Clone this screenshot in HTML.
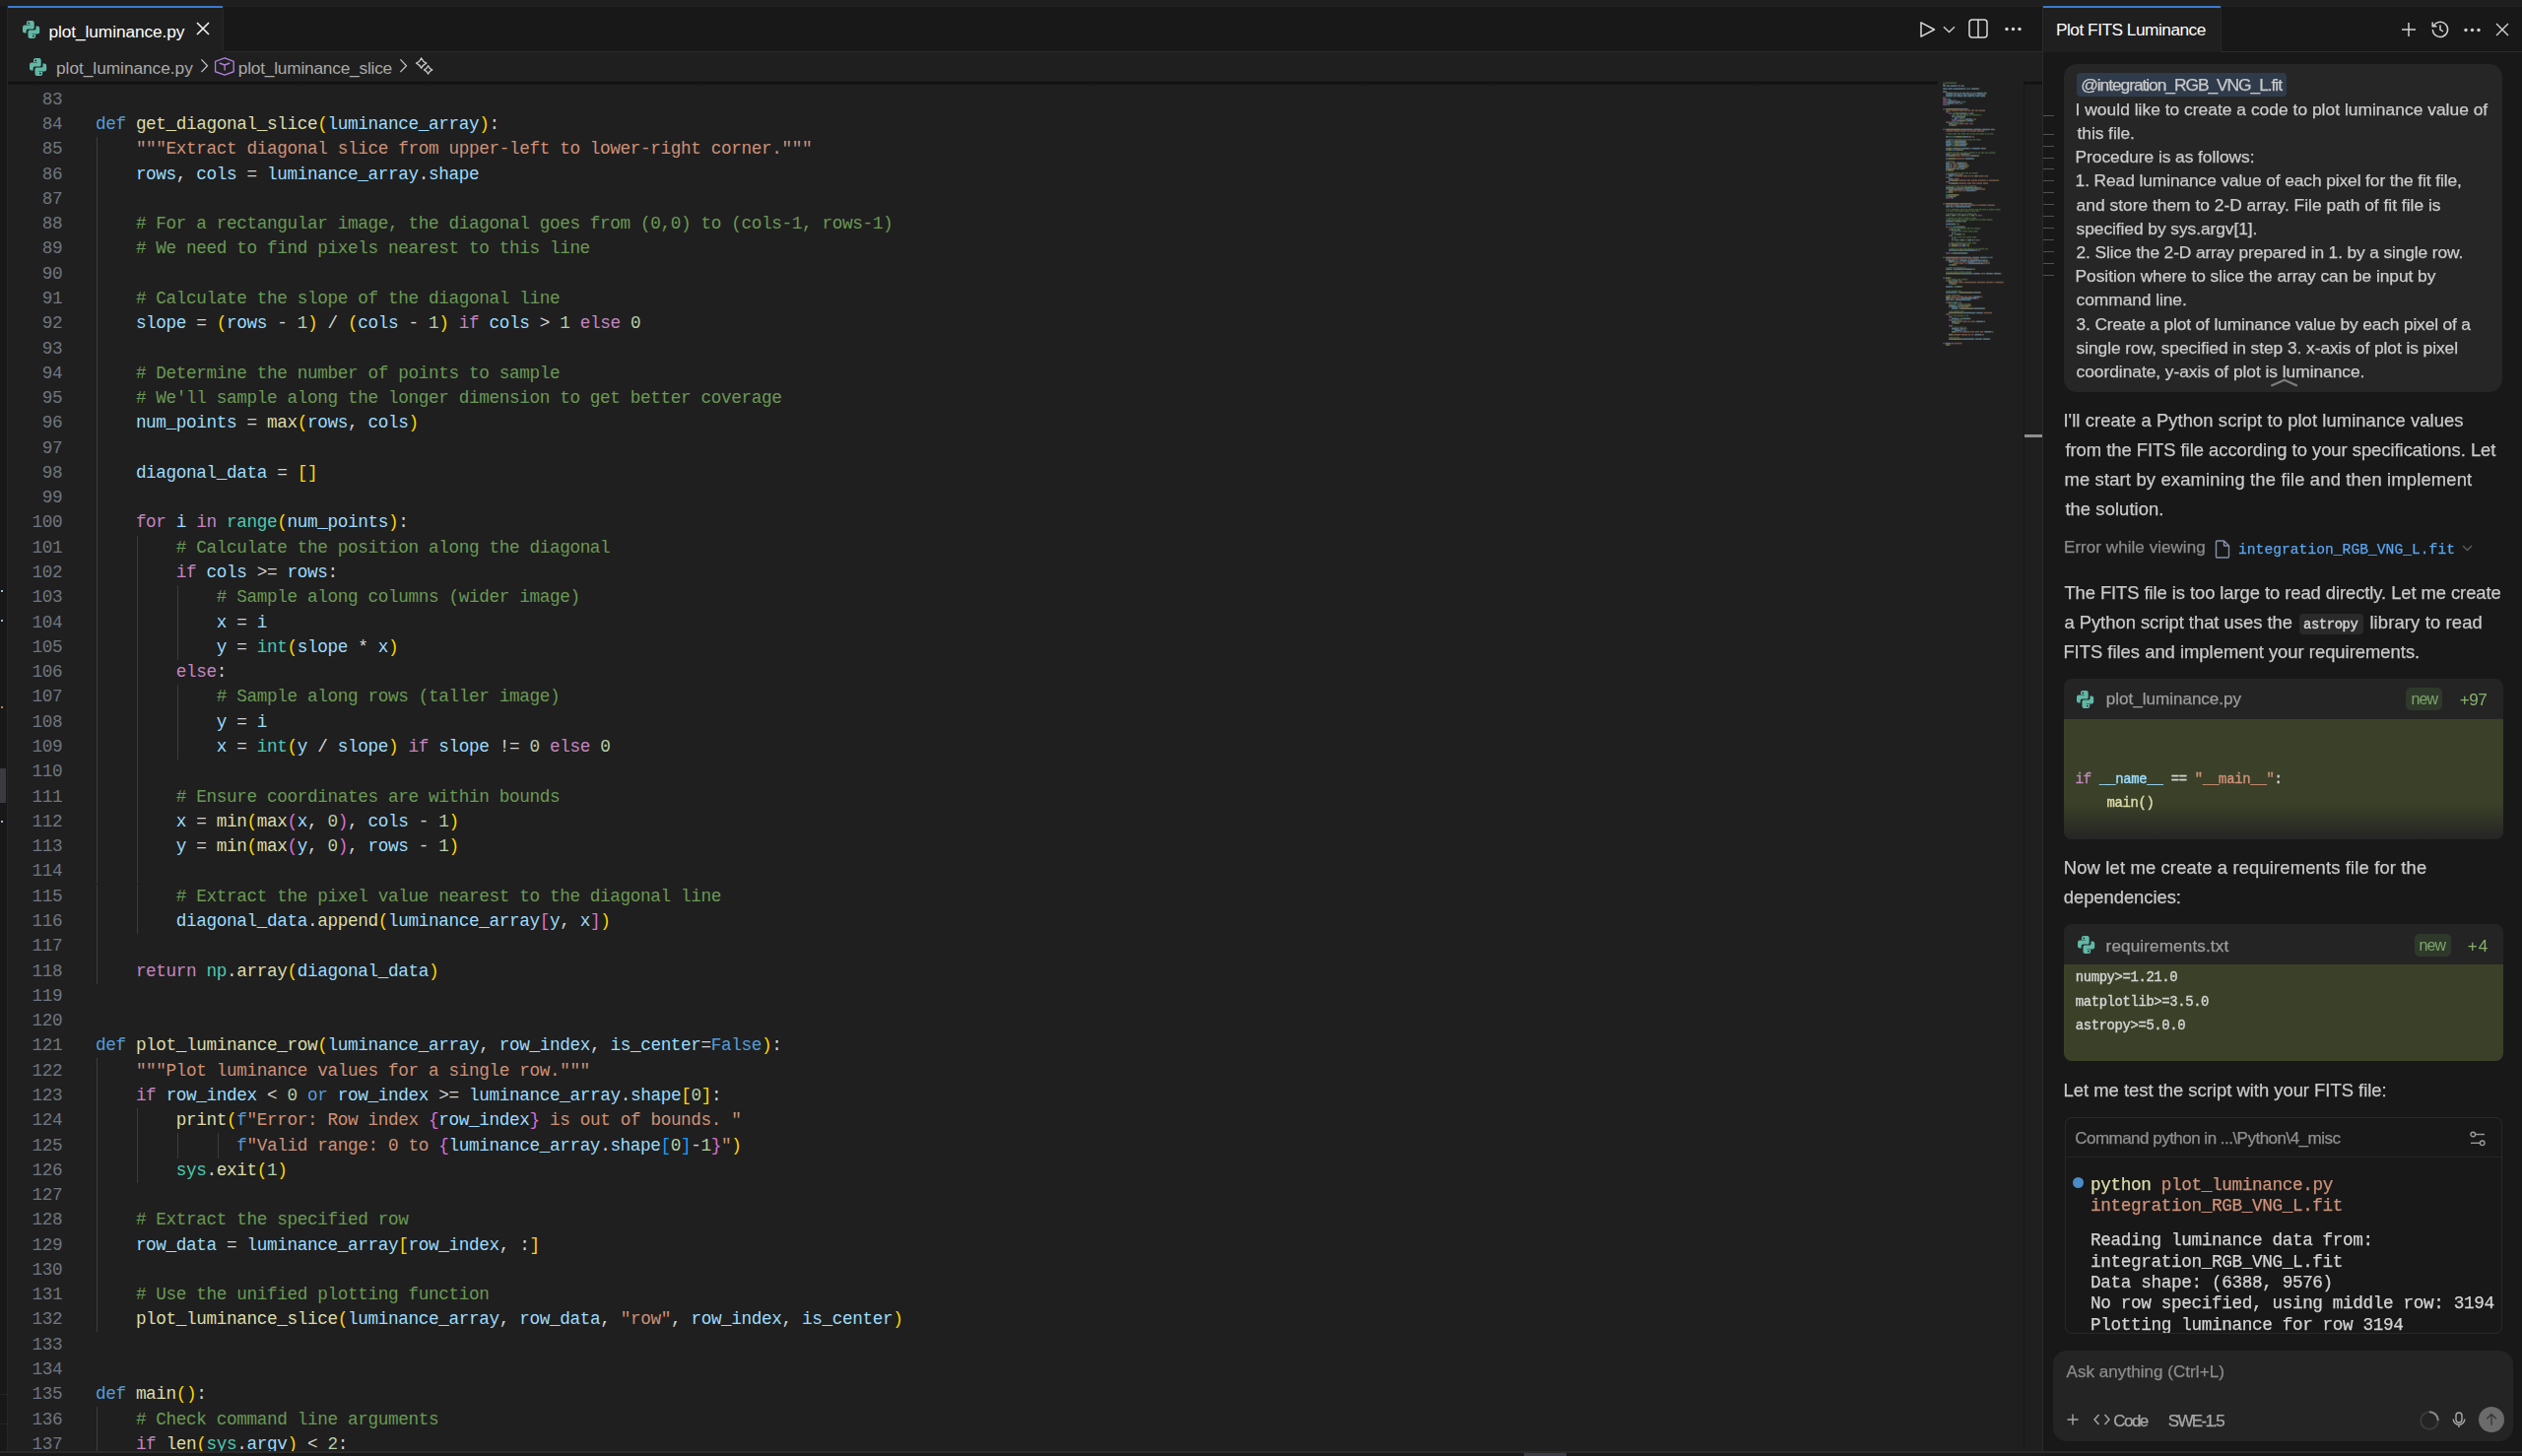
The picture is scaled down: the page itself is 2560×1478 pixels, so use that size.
<!DOCTYPE html><html><head><meta charset="utf-8"><style>
*{margin:0;padding:0;box-sizing:border-box}
html,body{width:2560px;height:1478px;overflow:hidden;background:#1f1f1f}
.a{position:absolute}
.t{white-space:pre}
.s1{-webkit-text-stroke:0.25px currentColor}
.s2{-webkit-text-stroke:0.4px currentColor}
svg{position:absolute;overflow:visible}
</style></head><body>
<div class="a" style="left:0px;top:0px;width:2560.00px;height:6.00px;background:#1f1f1f;"></div>
<div class="a" style="left:0px;top:6px;width:6.50px;height:1468.00px;background:#181818;"></div>
<div class="a" style="left:6.5px;top:6px;width:1.00px;height:1468.00px;background:#262626;"></div>
<div class="a" style="left:7.5px;top:6px;width:2065.50px;height:46.50px;background:#181818;"></div>
<div class="a" style="left:7.5px;top:6px;width:2065.50px;height:1.00px;background:#222222;"></div>
<div class="a" style="left:7.5px;top:52px;width:2065.50px;height:1.00px;background:#2b2b2b;"></div>
<div class="a" style="left:7.5px;top:6px;width:218.00px;height:47.00px;background:#1f1f1f;"></div>
<div class="a" style="left:225.5px;top:6px;width:1.00px;height:46.50px;background:#262626;"></div>
<div class="a" style="left:7.5px;top:6.2px;width:218.00px;height:2.00px;background:#3b7bd2;"></div>
<div class="a" style="left:7.5px;top:53px;width:2065.50px;height:1420.00px;background:#1f1f1f;"></div>
<div class="a" style="left:0px;top:779.6px;width:6.00px;height:35.00px;background:#3a3a40;"></div>
<div class="a" style="left:1px;top:599px;width:2.00px;height:2.00px;background:#9ab8d8;"></div>
<div class="a" style="left:1px;top:629px;width:2.00px;height:2.00px;background:#9ab8d8;"></div>
<div class="a" style="left:1px;top:716.7px;width:2.00px;height:2.00px;background:#c08050;"></div>
<div class="a" style="left:1px;top:833.2px;width:2.00px;height:2.00px;background:#9ab8d8;"></div>
<div class="a" style="left:97.70px;top:139.25px;width:1.3px;height:25.275px;background:#3c3c3c"></div>
<div class="a" style="left:97.70px;top:164.52px;width:1.3px;height:25.275px;background:#3c3c3c"></div>
<div class="a" style="left:97.70px;top:189.80px;width:1.3px;height:25.275px;background:#3c3c3c"></div>
<div class="a" style="left:97.70px;top:215.07px;width:1.3px;height:25.275px;background:#3c3c3c"></div>
<div class="a" style="left:97.70px;top:240.35px;width:1.3px;height:25.275px;background:#3c3c3c"></div>
<div class="a" style="left:97.70px;top:265.62px;width:1.3px;height:25.275px;background:#3c3c3c"></div>
<div class="a" style="left:97.70px;top:290.90px;width:1.3px;height:25.275px;background:#3c3c3c"></div>
<div class="a" style="left:97.70px;top:316.18px;width:1.3px;height:25.275px;background:#3c3c3c"></div>
<div class="a" style="left:97.70px;top:341.45px;width:1.3px;height:25.275px;background:#3c3c3c"></div>
<div class="a" style="left:97.70px;top:366.72px;width:1.3px;height:25.275px;background:#3c3c3c"></div>
<div class="a" style="left:97.70px;top:392.00px;width:1.3px;height:25.275px;background:#3c3c3c"></div>
<div class="a" style="left:97.70px;top:417.27px;width:1.3px;height:25.275px;background:#3c3c3c"></div>
<div class="a" style="left:97.70px;top:442.55px;width:1.3px;height:25.275px;background:#3c3c3c"></div>
<div class="a" style="left:97.70px;top:467.82px;width:1.3px;height:25.275px;background:#3c3c3c"></div>
<div class="a" style="left:97.70px;top:493.10px;width:1.3px;height:25.275px;background:#3c3c3c"></div>
<div class="a" style="left:97.70px;top:518.38px;width:1.3px;height:25.275px;background:#3c3c3c"></div>
<div class="a" style="left:97.70px;top:543.65px;width:1.3px;height:25.275px;background:#3c3c3c"></div>
<div class="a" style="left:138.70px;top:543.65px;width:1.3px;height:25.275px;background:#3c3c3c"></div>
<div class="a" style="left:97.70px;top:568.92px;width:1.3px;height:25.275px;background:#3c3c3c"></div>
<div class="a" style="left:138.70px;top:568.92px;width:1.3px;height:25.275px;background:#3c3c3c"></div>
<div class="a" style="left:97.70px;top:594.20px;width:1.3px;height:25.275px;background:#3c3c3c"></div>
<div class="a" style="left:138.70px;top:594.20px;width:1.3px;height:25.275px;background:#3c3c3c"></div>
<div class="a" style="left:179.70px;top:594.20px;width:1.3px;height:25.275px;background:#3c3c3c"></div>
<div class="a" style="left:97.70px;top:619.48px;width:1.3px;height:25.275px;background:#3c3c3c"></div>
<div class="a" style="left:138.70px;top:619.48px;width:1.3px;height:25.275px;background:#3c3c3c"></div>
<div class="a" style="left:179.70px;top:619.48px;width:1.3px;height:25.275px;background:#3c3c3c"></div>
<div class="a" style="left:97.70px;top:644.75px;width:1.3px;height:25.275px;background:#3c3c3c"></div>
<div class="a" style="left:138.70px;top:644.75px;width:1.3px;height:25.275px;background:#3c3c3c"></div>
<div class="a" style="left:179.70px;top:644.75px;width:1.3px;height:25.275px;background:#3c3c3c"></div>
<div class="a" style="left:97.70px;top:670.02px;width:1.3px;height:25.275px;background:#3c3c3c"></div>
<div class="a" style="left:138.70px;top:670.02px;width:1.3px;height:25.275px;background:#3c3c3c"></div>
<div class="a" style="left:97.70px;top:695.30px;width:1.3px;height:25.275px;background:#3c3c3c"></div>
<div class="a" style="left:138.70px;top:695.30px;width:1.3px;height:25.275px;background:#3c3c3c"></div>
<div class="a" style="left:179.70px;top:695.30px;width:1.3px;height:25.275px;background:#3c3c3c"></div>
<div class="a" style="left:97.70px;top:720.58px;width:1.3px;height:25.275px;background:#3c3c3c"></div>
<div class="a" style="left:138.70px;top:720.58px;width:1.3px;height:25.275px;background:#3c3c3c"></div>
<div class="a" style="left:179.70px;top:720.58px;width:1.3px;height:25.275px;background:#3c3c3c"></div>
<div class="a" style="left:97.70px;top:745.85px;width:1.3px;height:25.275px;background:#3c3c3c"></div>
<div class="a" style="left:138.70px;top:745.85px;width:1.3px;height:25.275px;background:#3c3c3c"></div>
<div class="a" style="left:179.70px;top:745.85px;width:1.3px;height:25.275px;background:#3c3c3c"></div>
<div class="a" style="left:97.70px;top:771.12px;width:1.3px;height:25.275px;background:#3c3c3c"></div>
<div class="a" style="left:138.70px;top:771.12px;width:1.3px;height:25.275px;background:#3c3c3c"></div>
<div class="a" style="left:97.70px;top:796.40px;width:1.3px;height:25.275px;background:#3c3c3c"></div>
<div class="a" style="left:138.70px;top:796.40px;width:1.3px;height:25.275px;background:#3c3c3c"></div>
<div class="a" style="left:97.70px;top:821.67px;width:1.3px;height:25.275px;background:#3c3c3c"></div>
<div class="a" style="left:138.70px;top:821.67px;width:1.3px;height:25.275px;background:#3c3c3c"></div>
<div class="a" style="left:97.70px;top:846.95px;width:1.3px;height:25.275px;background:#3c3c3c"></div>
<div class="a" style="left:138.70px;top:846.95px;width:1.3px;height:25.275px;background:#3c3c3c"></div>
<div class="a" style="left:97.70px;top:872.23px;width:1.3px;height:25.275px;background:#3c3c3c"></div>
<div class="a" style="left:138.70px;top:872.23px;width:1.3px;height:25.275px;background:#3c3c3c"></div>
<div class="a" style="left:97.70px;top:897.50px;width:1.3px;height:25.275px;background:#3c3c3c"></div>
<div class="a" style="left:138.70px;top:897.50px;width:1.3px;height:25.275px;background:#3c3c3c"></div>
<div class="a" style="left:97.70px;top:922.77px;width:1.3px;height:25.275px;background:#3c3c3c"></div>
<div class="a" style="left:138.70px;top:922.77px;width:1.3px;height:25.275px;background:#3c3c3c"></div>
<div class="a" style="left:97.70px;top:948.05px;width:1.3px;height:25.275px;background:#3c3c3c"></div>
<div class="a" style="left:97.70px;top:973.33px;width:1.3px;height:25.275px;background:#3c3c3c"></div>
<div class="a" style="left:97.70px;top:1074.42px;width:1.3px;height:25.275px;background:#3c3c3c"></div>
<div class="a" style="left:97.70px;top:1099.70px;width:1.3px;height:25.275px;background:#3c3c3c"></div>
<div class="a" style="left:97.70px;top:1124.97px;width:1.3px;height:25.275px;background:#3c3c3c"></div>
<div class="a" style="left:138.70px;top:1124.97px;width:1.3px;height:25.275px;background:#3c3c3c"></div>
<div class="a" style="left:97.70px;top:1150.25px;width:1.3px;height:25.275px;background:#3c3c3c"></div>
<div class="a" style="left:138.70px;top:1150.25px;width:1.3px;height:25.275px;background:#3c3c3c"></div>
<div class="a" style="left:179.70px;top:1150.25px;width:1.3px;height:25.275px;background:#3c3c3c"></div>
<div class="a" style="left:220.70px;top:1150.25px;width:1.3px;height:25.275px;background:#3c3c3c"></div>
<div class="a" style="left:97.70px;top:1175.53px;width:1.3px;height:25.275px;background:#3c3c3c"></div>
<div class="a" style="left:138.70px;top:1175.53px;width:1.3px;height:25.275px;background:#3c3c3c"></div>
<div class="a" style="left:97.70px;top:1200.80px;width:1.3px;height:25.275px;background:#3c3c3c"></div>
<div class="a" style="left:97.70px;top:1226.08px;width:1.3px;height:25.275px;background:#3c3c3c"></div>
<div class="a" style="left:97.70px;top:1251.35px;width:1.3px;height:25.275px;background:#3c3c3c"></div>
<div class="a" style="left:97.70px;top:1276.62px;width:1.3px;height:25.275px;background:#3c3c3c"></div>
<div class="a" style="left:97.70px;top:1301.90px;width:1.3px;height:25.275px;background:#3c3c3c"></div>
<div class="a" style="left:97.70px;top:1327.17px;width:1.3px;height:25.275px;background:#3c3c3c"></div>
<div class="a" style="left:97.70px;top:1428.27px;width:1.3px;height:25.275px;background:#3c3c3c"></div>
<div class="a" style="left:97.70px;top:1453.55px;width:1.3px;height:25.275px;background:#3c3c3c"></div>
<div class="a t" id="code" style="left:96.9px;top:88.70px;font-family:'Liberation Mono', monospace;font-size:17.7px;letter-spacing:-0.37px;line-height:25.275px;color:#d4d4d4">
<span style="color:#569cd6">def</span> <span style="color:#dcdcaa">get_diagonal_slice</span><span style="color:#ffd700">(</span><span style="color:#9cdcfe">luminance_array</span><span style="color:#ffd700">)</span><span style="color:#d4d4d4">:</span>
    <span style="color:#ce9178">"""Extract diagonal slice from upper-left to lower-right corner."""</span>
    <span style="color:#9cdcfe">rows</span><span style="color:#d4d4d4">,</span> <span style="color:#9cdcfe">cols</span> <span style="color:#d4d4d4">=</span> <span style="color:#9cdcfe">luminance_array</span><span style="color:#d4d4d4">.</span><span style="color:#9cdcfe">shape</span>

    <span style="color:#6a9955"># For a rectangular image, the diagonal goes from (0,0) to (cols-1, rows-1)</span>
    <span style="color:#6a9955"># We need to find pixels nearest to this line</span>

    <span style="color:#6a9955"># Calculate the slope of the diagonal line</span>
    <span style="color:#9cdcfe">slope</span> <span style="color:#d4d4d4">=</span> <span style="color:#ffd700">(</span><span style="color:#9cdcfe">rows</span> <span style="color:#d4d4d4">-</span> <span style="color:#b5cea8">1</span><span style="color:#ffd700">)</span> <span style="color:#d4d4d4">/</span> <span style="color:#ffd700">(</span><span style="color:#9cdcfe">cols</span> <span style="color:#d4d4d4">-</span> <span style="color:#b5cea8">1</span><span style="color:#ffd700">)</span> <span style="color:#c586c0">if</span> <span style="color:#9cdcfe">cols</span> <span style="color:#d4d4d4">&gt;</span> <span style="color:#b5cea8">1</span> <span style="color:#c586c0">else</span> <span style="color:#b5cea8">0</span>

    <span style="color:#6a9955"># Determine the number of points to sample</span>
    <span style="color:#6a9955"># We'll sample along the longer dimension to get better coverage</span>
    <span style="color:#9cdcfe">num_points</span> <span style="color:#d4d4d4">=</span> <span style="color:#dcdcaa">max</span><span style="color:#ffd700">(</span><span style="color:#9cdcfe">rows</span><span style="color:#d4d4d4">,</span> <span style="color:#9cdcfe">cols</span><span style="color:#ffd700">)</span>

    <span style="color:#9cdcfe">diagonal_data</span> <span style="color:#d4d4d4">=</span> <span style="color:#ffd700">[</span><span style="color:#ffd700">]</span>

    <span style="color:#c586c0">for</span> <span style="color:#9cdcfe">i</span> <span style="color:#c586c0">in</span> <span style="color:#4ec9b0">range</span><span style="color:#ffd700">(</span><span style="color:#9cdcfe">num_points</span><span style="color:#ffd700">)</span><span style="color:#d4d4d4">:</span>
        <span style="color:#6a9955"># Calculate the position along the diagonal</span>
        <span style="color:#c586c0">if</span> <span style="color:#9cdcfe">cols</span> <span style="color:#d4d4d4">&gt;=</span> <span style="color:#9cdcfe">rows</span><span style="color:#d4d4d4">:</span>
            <span style="color:#6a9955"># Sample along columns (wider image)</span>
            <span style="color:#9cdcfe">x</span> <span style="color:#d4d4d4">=</span> <span style="color:#9cdcfe">i</span>
            <span style="color:#9cdcfe">y</span> <span style="color:#d4d4d4">=</span> <span style="color:#4ec9b0">int</span><span style="color:#ffd700">(</span><span style="color:#9cdcfe">slope</span> <span style="color:#d4d4d4">*</span> <span style="color:#9cdcfe">x</span><span style="color:#ffd700">)</span>
        <span style="color:#c586c0">else</span><span style="color:#d4d4d4">:</span>
            <span style="color:#6a9955"># Sample along rows (taller image)</span>
            <span style="color:#9cdcfe">y</span> <span style="color:#d4d4d4">=</span> <span style="color:#9cdcfe">i</span>
            <span style="color:#9cdcfe">x</span> <span style="color:#d4d4d4">=</span> <span style="color:#4ec9b0">int</span><span style="color:#ffd700">(</span><span style="color:#9cdcfe">y</span> <span style="color:#d4d4d4">/</span> <span style="color:#9cdcfe">slope</span><span style="color:#ffd700">)</span> <span style="color:#c586c0">if</span> <span style="color:#9cdcfe">slope</span> <span style="color:#d4d4d4">!=</span> <span style="color:#b5cea8">0</span> <span style="color:#c586c0">else</span> <span style="color:#b5cea8">0</span>

        <span style="color:#6a9955"># Ensure coordinates are within bounds</span>
        <span style="color:#9cdcfe">x</span> <span style="color:#d4d4d4">=</span> <span style="color:#dcdcaa">min</span><span style="color:#ffd700">(</span><span style="color:#dcdcaa">max</span><span style="color:#da70d6">(</span><span style="color:#9cdcfe">x</span><span style="color:#d4d4d4">,</span> <span style="color:#b5cea8">0</span><span style="color:#da70d6">)</span><span style="color:#d4d4d4">,</span> <span style="color:#9cdcfe">cols</span> <span style="color:#d4d4d4">-</span> <span style="color:#b5cea8">1</span><span style="color:#ffd700">)</span>
        <span style="color:#9cdcfe">y</span> <span style="color:#d4d4d4">=</span> <span style="color:#dcdcaa">min</span><span style="color:#ffd700">(</span><span style="color:#dcdcaa">max</span><span style="color:#da70d6">(</span><span style="color:#9cdcfe">y</span><span style="color:#d4d4d4">,</span> <span style="color:#b5cea8">0</span><span style="color:#da70d6">)</span><span style="color:#d4d4d4">,</span> <span style="color:#9cdcfe">rows</span> <span style="color:#d4d4d4">-</span> <span style="color:#b5cea8">1</span><span style="color:#ffd700">)</span>

        <span style="color:#6a9955"># Extract the pixel value nearest to the diagonal line</span>
        <span style="color:#9cdcfe">diagonal_data</span><span style="color:#d4d4d4">.</span><span style="color:#dcdcaa">append</span><span style="color:#ffd700">(</span><span style="color:#9cdcfe">luminance_array</span><span style="color:#da70d6">[</span><span style="color:#9cdcfe">y</span><span style="color:#d4d4d4">,</span> <span style="color:#9cdcfe">x</span><span style="color:#da70d6">]</span><span style="color:#ffd700">)</span>

    <span style="color:#c586c0">return</span> <span style="color:#4ec9b0">np</span><span style="color:#d4d4d4">.</span><span style="color:#dcdcaa">array</span><span style="color:#ffd700">(</span><span style="color:#9cdcfe">diagonal_data</span><span style="color:#ffd700">)</span>


<span style="color:#569cd6">def</span> <span style="color:#dcdcaa">plot_luminance_row</span><span style="color:#ffd700">(</span><span style="color:#9cdcfe">luminance_array</span><span style="color:#d4d4d4">,</span> <span style="color:#9cdcfe">row_index</span><span style="color:#d4d4d4">,</span> <span style="color:#9cdcfe">is_center</span><span style="color:#d4d4d4">=</span><span style="color:#569cd6">False</span><span style="color:#ffd700">)</span><span style="color:#d4d4d4">:</span>
    <span style="color:#ce9178">"""Plot luminance values for a single row."""</span>
    <span style="color:#c586c0">if</span> <span style="color:#9cdcfe">row_index</span> <span style="color:#d4d4d4">&lt;</span> <span style="color:#b5cea8">0</span> <span style="color:#569cd6">or</span> <span style="color:#9cdcfe">row_index</span> <span style="color:#d4d4d4">&gt;=</span> <span style="color:#9cdcfe">luminance_array</span><span style="color:#d4d4d4">.</span><span style="color:#9cdcfe">shape</span><span style="color:#ffd700">[</span><span style="color:#b5cea8">0</span><span style="color:#ffd700">]</span><span style="color:#d4d4d4">:</span>
        <span style="color:#dcdcaa">print</span><span style="color:#ffd700">(</span><span style="color:#569cd6">f</span><span style="color:#ce9178">"Error: Row index </span><span style="color:#da70d6">{</span><span style="color:#9cdcfe">row_index</span><span style="color:#da70d6">}</span><span style="color:#ce9178"> is out of bounds. "</span>
              <span style="color:#569cd6">f</span><span style="color:#ce9178">"Valid range: 0 to </span><span style="color:#da70d6">{</span><span style="color:#9cdcfe">luminance_array</span><span style="color:#d4d4d4">.</span><span style="color:#9cdcfe">shape</span><span style="color:#179fff">[</span><span style="color:#b5cea8">0</span><span style="color:#179fff">]</span><span style="color:#d4d4d4">-</span><span style="color:#b5cea8">1</span><span style="color:#da70d6">}</span><span style="color:#ce9178">"</span><span style="color:#ffd700">)</span>
        <span style="color:#4ec9b0">sys</span><span style="color:#d4d4d4">.</span><span style="color:#dcdcaa">exit</span><span style="color:#ffd700">(</span><span style="color:#b5cea8">1</span><span style="color:#ffd700">)</span>

    <span style="color:#6a9955"># Extract the specified row</span>
    <span style="color:#9cdcfe">row_data</span> <span style="color:#d4d4d4">=</span> <span style="color:#9cdcfe">luminance_array</span><span style="color:#ffd700">[</span><span style="color:#9cdcfe">row_index</span><span style="color:#d4d4d4">,</span> <span style="color:#d4d4d4">:</span><span style="color:#ffd700">]</span>

    <span style="color:#6a9955"># Use the unified plotting function</span>
    <span style="color:#dcdcaa">plot_luminance_slice</span><span style="color:#ffd700">(</span><span style="color:#9cdcfe">luminance_array</span><span style="color:#d4d4d4">,</span> <span style="color:#9cdcfe">row_data</span><span style="color:#d4d4d4">,</span> <span style="color:#ce9178">"row"</span><span style="color:#d4d4d4">,</span> <span style="color:#9cdcfe">row_index</span><span style="color:#d4d4d4">,</span> <span style="color:#9cdcfe">is_center</span><span style="color:#ffd700">)</span>


<span style="color:#569cd6">def</span> <span style="color:#dcdcaa">main</span><span style="color:#ffd700">(</span><span style="color:#ffd700">)</span><span style="color:#d4d4d4">:</span>
    <span style="color:#6a9955"># Check command line arguments</span>
    <span style="color:#c586c0">if</span> <span style="color:#dcdcaa">len</span><span style="color:#ffd700">(</span><span style="color:#4ec9b0">sys</span><span style="color:#d4d4d4">.</span><span style="color:#9cdcfe">argv</span><span style="color:#ffd700">)</span> <span style="color:#d4d4d4">&lt;</span> <span style="color:#b5cea8">2</span><span style="color:#d4d4d4">:</span></div>
<div class="a t" id="nums" style="left:0px;width:63.2px;text-align:right;top:88.70px;font-family:'Liberation Mono', monospace;font-size:17.7px;letter-spacing:-0.37px;line-height:25.275px;color:#6e7681">83
84
85
86
87
88
89
90
91
92
93
94
95
96
97
98
99
100
101
102
103
104
105
106
107
108
109
110
111
112
113
114
115
116
117
118
119
120
121
122
123
124
125
126
127
128
129
130
131
132
133
134
135
136
137</div>
<div class="a" style="left:7.5px;top:83px;width:1959px;height:4px;background:linear-gradient(#0d0d0d,rgba(0,0,0,0))"></div>
<svg width="17.2" height="18.1" viewBox="0 0 17.2 18.1" style="left:23px;top:20.8px"><g fill="#62b8a6">
<path id="pyh" d="M4 2.1Q4 0 6.1 0H9.6Q11.7 0 11.7 2.1V6.9Q11.7 8.5 10.1 8.5H5.3Q3.7 8.5 3.7 10.1V12.5H2.1Q0 12.5 0 10.4V6.7Q0 4.6 2.1 4.6H4Z"/>
<path d="M4 2.1Q4 0 6.1 0H9.6Q11.7 0 11.7 2.1V6.9Q11.7 8.5 10.1 8.5H5.3Q3.7 8.5 3.7 10.1V12.5H2.1Q0 12.5 0 10.4V6.7Q0 4.6 2.1 4.6H4Z" transform="rotate(180 8.6 9.05)"/></g>
<g fill="#1f1f1f"><circle cx="6.3" cy="2.4" r="0.85"/><circle cx="10.9" cy="15.7" r="0.85"/></g>
<g stroke="#1f1f1f" stroke-width="0.45"><path d="M4 4.6H7.8"/><path d="M9.4 13.5H13.2"/></g></svg>
<div id="tab" class="a t " style="left:49.60px;top:19.61px;font-family:'Liberation Sans', sans-serif;font-size:17.3px;line-height:24.22px;color:#ffffff;letter-spacing:-0.094px;">plot_luminance.py</div>
<svg width="14" height="14" viewBox="0 0 14 14" style="left:199.3px;top:22px"><path d="M1 1L13 13M13 1L1 13" stroke="#f2f2f2" stroke-width="1.6"/></svg>
<svg width="17.2" height="18.1" viewBox="0 0 17.2 18.1" style="left:30px;top:58.9px"><g fill="#62b8a6">
<path id="pyh" d="M4 2.1Q4 0 6.1 0H9.6Q11.7 0 11.7 2.1V6.9Q11.7 8.5 10.1 8.5H5.3Q3.7 8.5 3.7 10.1V12.5H2.1Q0 12.5 0 10.4V6.7Q0 4.6 2.1 4.6H4Z"/>
<path d="M4 2.1Q4 0 6.1 0H9.6Q11.7 0 11.7 2.1V6.9Q11.7 8.5 10.1 8.5H5.3Q3.7 8.5 3.7 10.1V12.5H2.1Q0 12.5 0 10.4V6.7Q0 4.6 2.1 4.6H4Z" transform="rotate(180 8.6 9.05)"/></g>
<g fill="#1f1f1f"><circle cx="6.3" cy="2.4" r="0.85"/><circle cx="10.9" cy="15.7" r="0.85"/></g>
<g stroke="#1f1f1f" stroke-width="0.45"><path d="M4 4.6H7.8"/><path d="M9.4 13.5H13.2"/></g></svg>
<div id="bc1" class="a t " style="left:57.00px;top:56.61px;font-family:'Liberation Sans', sans-serif;font-size:17.3px;line-height:24.22px;color:#a9a9a9;letter-spacing:-0.031px;">plot_luminance.py</div>
<svg width="10" height="16" viewBox="0 0 10 16" style="left:201.5px;top:58px"><path d="M2.4 2.4L8.5 8.7L2.4 15.1" fill="none" stroke="#c0c0c0" stroke-width="1.3"/></svg>
<svg width="30" height="30" viewBox="0 0 30 30" style="left:210px;top:50px"><g fill="none" stroke="#ad7fd6" stroke-width="1.35" stroke-linejoin="round"><path d="M18.1 8.8L27.2 12.4V22.75L18.1 26.1L8.6 22.75V12.4Z"/><path d="M12.7 14L18.1 16L23.25 14M18.1 16V21.5"/></g></svg>
<div id="bc2" class="a t " style="left:241.80px;top:56.61px;font-family:'Liberation Sans', sans-serif;font-size:17.3px;line-height:24.22px;color:#a9a9a9;letter-spacing:-0.211px;">plot_luminance_slice</div>
<svg width="10" height="16" viewBox="0 0 10 16" style="left:404px;top:58px"><path d="M2.4 2.4L8.5 8.7L2.4 15.1" fill="none" stroke="#c0c0c0" stroke-width="1.3"/></svg>
<svg width="30" height="30" viewBox="0 0 30 30" style="left:410px;top:50px"><g fill="none" stroke="#c8c8c8" stroke-width="1.3" stroke-linejoin="round"><path d="M17.7 8.899999999999999Q19.16 12.64 22.9 14.1Q19.16 15.56 17.7 19.3Q16.24 15.56 12.5 14.1Q16.24 12.64 17.7 8.899999999999999Z"/><path d="M24.6 16.7Q25.78 19.72 28.8 20.9Q25.78 22.08 24.6 25.099999999999998Q23.42 22.08 20.400000000000002 20.9Q23.42 19.72 24.6 16.7Z"/></g></svg>
<svg width="18" height="18" viewBox="0 0 18 18" style="left:1948px;top:20.5px"><path d="M2 1.8L15.5 9L2 16.2Z" fill="none" stroke="#d8d8d8" stroke-width="1.5" stroke-linejoin="round"/></svg>
<svg width="13" height="8" viewBox="0 0 13 8" style="left:1971.5px;top:25.8px"><path d="M1 1.2L6.5 6.5L12 1.2" fill="none" stroke="#d0d0d0" stroke-width="1.3"/></svg>
<svg width="20" height="20" viewBox="0 0 20 20" style="left:1998px;top:19.2px"><rect x="1" y="1" width="18" height="18" rx="3" fill="none" stroke="#d8d8d8" stroke-width="1.5"/><path d="M10 1V19" stroke="#d8d8d8" stroke-width="1.5"/></svg>
<svg width="17" height="5" viewBox="0 0 17 5" style="left:2034.5px;top:26.7px"><g fill="#d8d8d8"><circle cx="2" cy="2.5" r="1.7"/><circle cx="8.5" cy="2.5" r="1.7"/><circle cx="15" cy="2.5" r="1.7"/></g></svg>
<svg width="2560" height="1478" style="left:0;top:0;opacity:0.42"><rect x="1972.20" y="83.40" width="0.74" height="1.6" fill="#6a9955"/><rect x="1973.68" y="83.40" width="12.58" height="1.6" fill="#6a9955"/><rect x="1972.20" y="84.88" width="2.22" height="1.6" fill="#ce9178"/><rect x="1972.20" y="86.35" width="2.96" height="1.6" fill="#9cdcfe"/><rect x="1975.90" y="86.35" width="2.96" height="1.6" fill="#9cdcfe"/><rect x="1979.60" y="86.35" width="6.66" height="1.6" fill="#9cdcfe"/><rect x="1987.00" y="86.35" width="2.96" height="1.6" fill="#c586c0"/><rect x="1990.70" y="86.35" width="2.96" height="1.6" fill="#9cdcfe"/><rect x="1972.20" y="89.31" width="3.70" height="1.6" fill="#9cdcfe"/><rect x="1975.90" y="89.31" width="0.74" height="1.6" fill="#d4d4d4"/><rect x="1977.38" y="89.31" width="4.44" height="1.6" fill="#9cdcfe"/><rect x="1982.56" y="89.31" width="10.36" height="1.6" fill="#9cdcfe"/><rect x="1992.92" y="89.31" width="0.74" height="1.6" fill="#d4d4d4"/><rect x="1993.66" y="89.31" width="1.48" height="1.6" fill="#9cdcfe"/><rect x="1995.88" y="89.31" width="0.74" height="1.6" fill="#d4d4d4"/><rect x="1996.62" y="89.31" width="2.96" height="1.6" fill="#4ec9b0"/><rect x="1999.58" y="89.31" width="0.74" height="1.6" fill="#d4d4d4"/><rect x="2001.06" y="89.31" width="0.74" height="1.6" fill="#ffd700"/><rect x="2001.80" y="89.31" width="6.66" height="1.6" fill="#9cdcfe"/><rect x="2008.46" y="89.31" width="0.74" height="1.6" fill="#ffd700"/><rect x="1972.20" y="92.26" width="2.96" height="1.6" fill="#9cdcfe"/><rect x="1975.16" y="92.26" width="0.74" height="1.6" fill="#d4d4d4"/><rect x="1975.16" y="93.74" width="6.66" height="1.6" fill="#9cdcfe"/><rect x="1981.82" y="93.74" width="0.74" height="1.6" fill="#d4d4d4"/><rect x="1983.30" y="93.74" width="2.96" height="1.6" fill="#9cdcfe"/><rect x="1987.00" y="93.74" width="1.48" height="1.6" fill="#9cdcfe"/><rect x="1989.22" y="93.74" width="2.22" height="1.6" fill="#9cdcfe"/><rect x="1992.18" y="93.74" width="2.96" height="1.6" fill="#9cdcfe"/><rect x="1995.88" y="93.74" width="2.96" height="1.6" fill="#9cdcfe"/><rect x="1999.58" y="93.74" width="2.96" height="1.6" fill="#c586c0"/><rect x="2003.28" y="93.74" width="2.22" height="1.6" fill="#9cdcfe"/><rect x="2006.24" y="93.74" width="6.66" height="1.6" fill="#9cdcfe"/><rect x="2013.64" y="93.74" width="2.96" height="1.6" fill="#9cdcfe"/><rect x="1975.16" y="95.22" width="6.66" height="1.6" fill="#9cdcfe"/><rect x="1981.82" y="95.22" width="0.74" height="1.6" fill="#d4d4d4"/><rect x="1983.30" y="95.22" width="2.22" height="1.6" fill="#9cdcfe"/><rect x="1986.26" y="95.22" width="3.70" height="1.6" fill="#9cdcfe"/><rect x="1990.70" y="95.22" width="1.48" height="1.6" fill="#9cdcfe"/><rect x="1992.92" y="95.22" width="3.70" height="1.6" fill="#9cdcfe"/><rect x="1997.36" y="95.22" width="0.74" height="1.6" fill="#ffd700"/><rect x="1998.10" y="95.22" width="5.92" height="1.6" fill="#9cdcfe"/><rect x="2004.76" y="95.22" width="1.48" height="1.6" fill="#9cdcfe"/><rect x="2006.98" y="95.22" width="4.44" height="1.6" fill="#9cdcfe"/><rect x="2012.16" y="95.22" width="2.22" height="1.6" fill="#9cdcfe"/><rect x="2014.38" y="95.22" width="0.74" height="1.6" fill="#ffd700"/><rect x="1975.16" y="96.69" width="5.92" height="1.6" fill="#9cdcfe"/><rect x="1981.08" y="96.69" width="0.74" height="1.6" fill="#d4d4d4"/><rect x="1982.56" y="96.69" width="2.96" height="1.6" fill="#9cdcfe"/><rect x="1986.26" y="96.69" width="5.92" height="1.6" fill="#9cdcfe"/><rect x="1992.92" y="96.69" width="3.70" height="1.6" fill="#9cdcfe"/><rect x="1997.36" y="96.69" width="4.44" height="1.6" fill="#9cdcfe"/><rect x="2002.54" y="96.69" width="2.22" height="1.6" fill="#9cdcfe"/><rect x="2005.50" y="96.69" width="3.70" height="1.6" fill="#9cdcfe"/><rect x="2009.94" y="96.69" width="5.18" height="1.6" fill="#9cdcfe"/><rect x="1972.20" y="98.17" width="2.22" height="1.6" fill="#ce9178"/><rect x="1972.20" y="99.65" width="4.44" height="1.6" fill="#c586c0"/><rect x="1977.38" y="99.65" width="2.22" height="1.6" fill="#4ec9b0"/><rect x="1972.20" y="101.12" width="4.44" height="1.6" fill="#c586c0"/><rect x="1977.38" y="101.12" width="3.70" height="1.6" fill="#9cdcfe"/><rect x="1981.82" y="101.12" width="1.48" height="1.6" fill="#c586c0"/><rect x="1984.04" y="101.12" width="1.48" height="1.6" fill="#4ec9b0"/><rect x="1972.20" y="102.60" width="4.44" height="1.6" fill="#c586c0"/><rect x="1977.38" y="102.60" width="7.40" height="1.6" fill="#9cdcfe"/><rect x="1984.78" y="102.60" width="0.74" height="1.6" fill="#d4d4d4"/><rect x="1985.52" y="102.60" width="4.44" height="1.6" fill="#9cdcfe"/><rect x="1990.70" y="102.60" width="1.48" height="1.6" fill="#c586c0"/><rect x="1992.92" y="102.60" width="2.22" height="1.6" fill="#4ec9b0"/><rect x="1972.20" y="104.08" width="2.96" height="1.6" fill="#c586c0"/><rect x="1975.90" y="104.08" width="5.18" height="1.6" fill="#9cdcfe"/><rect x="1981.08" y="104.08" width="0.74" height="1.6" fill="#d4d4d4"/><rect x="1981.82" y="104.08" width="1.48" height="1.6" fill="#9cdcfe"/><rect x="1984.04" y="104.08" width="4.44" height="1.6" fill="#c586c0"/><rect x="1989.22" y="104.08" width="2.96" height="1.6" fill="#4ec9b0"/><rect x="1972.20" y="105.56" width="4.44" height="1.6" fill="#c586c0"/><rect x="1977.38" y="105.56" width="1.48" height="1.6" fill="#4ec9b0"/><rect x="1972.20" y="109.99" width="2.22" height="1.6" fill="#569cd6"/><rect x="1975.16" y="109.99" width="14.06" height="1.6" fill="#dcdcaa"/><rect x="1989.22" y="109.99" width="0.74" height="1.6" fill="#ffd700"/><rect x="1989.96" y="109.99" width="6.66" height="1.6" fill="#9cdcfe"/><rect x="1996.62" y="109.99" width="0.74" height="1.6" fill="#ffd700"/><rect x="1997.36" y="109.99" width="0.74" height="1.6" fill="#d4d4d4"/><rect x="1975.16" y="111.46" width="5.18" height="1.6" fill="#ce9178"/><rect x="1981.08" y="111.46" width="6.66" height="1.6" fill="#ce9178"/><rect x="1988.48" y="111.46" width="4.44" height="1.6" fill="#ce9178"/><rect x="1993.66" y="111.46" width="2.96" height="1.6" fill="#ce9178"/><rect x="1997.36" y="111.46" width="2.96" height="1.6" fill="#ce9178"/><rect x="2001.06" y="111.46" width="2.96" height="1.6" fill="#ce9178"/><rect x="2004.76" y="111.46" width="2.96" height="1.6" fill="#ce9178"/><rect x="2008.46" y="111.46" width="6.66" height="1.6" fill="#ce9178"/><rect x="1975.16" y="112.94" width="2.22" height="1.6" fill="#c586c0"/><rect x="1977.38" y="112.94" width="0.74" height="1.6" fill="#d4d4d4"/><rect x="1978.12" y="114.42" width="2.96" height="1.6" fill="#c586c0"/><rect x="1981.82" y="114.42" width="2.96" height="1.6" fill="#4ec9b0"/><rect x="1984.78" y="114.42" width="0.74" height="1.6" fill="#d4d4d4"/><rect x="1985.52" y="114.42" width="2.96" height="1.6" fill="#dcdcaa"/><rect x="1988.48" y="114.42" width="0.74" height="1.6" fill="#ffd700"/><rect x="1989.22" y="114.42" width="6.66" height="1.6" fill="#9cdcfe"/><rect x="1995.88" y="114.42" width="0.74" height="1.6" fill="#ffd700"/><rect x="1997.36" y="114.42" width="1.48" height="1.6" fill="#c586c0"/><rect x="1999.58" y="114.42" width="2.96" height="1.6" fill="#9cdcfe"/><rect x="2002.54" y="114.42" width="0.74" height="1.6" fill="#d4d4d4"/><rect x="1981.08" y="115.89" width="0.74" height="1.6" fill="#6a9955"/><rect x="1982.56" y="115.89" width="2.22" height="1.6" fill="#6a9955"/><rect x="1985.52" y="115.89" width="2.96" height="1.6" fill="#6a9955"/><rect x="1989.22" y="115.89" width="2.96" height="1.6" fill="#6a9955"/><rect x="1992.92" y="115.89" width="5.18" height="1.6" fill="#6a9955"/><rect x="1998.84" y="115.89" width="2.22" height="1.6" fill="#6a9955"/><rect x="2001.80" y="115.89" width="7.40" height="1.6" fill="#6a9955"/><rect x="2009.94" y="115.89" width="1.48" height="1.6" fill="#6a9955"/><rect x="1981.08" y="117.37" width="2.96" height="1.6" fill="#9cdcfe"/><rect x="1984.78" y="117.37" width="0.74" height="1.6" fill="#d4d4d4"/><rect x="1986.26" y="117.37" width="2.96" height="1.6" fill="#9cdcfe"/><rect x="1989.22" y="117.37" width="0.74" height="1.6" fill="#ffd700"/><rect x="1989.96" y="117.37" width="0.74" height="1.6" fill="#b5cea8"/><rect x="1990.70" y="117.37" width="0.74" height="1.6" fill="#ffd700"/><rect x="1991.44" y="117.37" width="0.74" height="1.6" fill="#d4d4d4"/><rect x="1992.18" y="117.37" width="2.96" height="1.6" fill="#9cdcfe"/><rect x="1984.04" y="118.85" width="2.96" height="1.6" fill="#9cdcfe"/><rect x="1987.74" y="118.85" width="0.74" height="1.6" fill="#d4d4d4"/><rect x="1989.22" y="118.85" width="2.96" height="1.6" fill="#9cdcfe"/><rect x="1992.18" y="118.85" width="0.74" height="1.6" fill="#ffd700"/><rect x="1992.92" y="118.85" width="0.74" height="1.6" fill="#b5cea8"/><rect x="1993.66" y="118.85" width="0.74" height="1.6" fill="#ffd700"/><rect x="1981.08" y="120.33" width="1.48" height="1.6" fill="#c586c0"/><rect x="1983.30" y="120.33" width="2.96" height="1.6" fill="#9cdcfe"/><rect x="1987.00" y="120.33" width="1.48" height="1.6" fill="#569cd6"/><rect x="1989.22" y="120.33" width="2.96" height="1.6" fill="#569cd6"/><rect x="1992.92" y="120.33" width="1.48" height="1.6" fill="#569cd6"/><rect x="1995.14" y="120.33" width="2.96" height="1.6" fill="#9cdcfe"/><rect x="1998.10" y="120.33" width="0.74" height="1.6" fill="#d4d4d4"/><rect x="1998.84" y="120.33" width="2.96" height="1.6" fill="#9cdcfe"/><rect x="2002.54" y="120.33" width="0.74" height="1.6" fill="#d4d4d4"/><rect x="2004.02" y="120.33" width="0.74" height="1.6" fill="#b5cea8"/><rect x="2004.76" y="120.33" width="0.74" height="1.6" fill="#d4d4d4"/><rect x="1981.08" y="121.80" width="4.44" height="1.6" fill="#c586c0"/><rect x="1986.26" y="121.80" width="2.96" height="1.6" fill="#9cdcfe"/><rect x="1989.22" y="121.80" width="0.74" height="1.6" fill="#d4d4d4"/><rect x="1989.96" y="121.80" width="4.44" height="1.6" fill="#dcdcaa"/><rect x="1994.40" y="121.80" width="0.74" height="1.6" fill="#ffd700"/><rect x="1995.14" y="121.80" width="1.48" height="1.6" fill="#4ec9b0"/><rect x="1996.62" y="121.80" width="0.74" height="1.6" fill="#d4d4d4"/><rect x="1997.36" y="121.80" width="5.18" height="1.6" fill="#9cdcfe"/><rect x="2002.54" y="121.80" width="0.74" height="1.6" fill="#ffd700"/><rect x="1975.16" y="123.28" width="4.44" height="1.6" fill="#c586c0"/><rect x="1980.34" y="123.28" width="6.66" height="1.6" fill="#4ec9b0"/><rect x="1987.74" y="123.28" width="1.48" height="1.6" fill="#c586c0"/><rect x="1989.96" y="123.28" width="0.74" height="1.6" fill="#9cdcfe"/><rect x="1990.70" y="123.28" width="0.74" height="1.6" fill="#d4d4d4"/><rect x="1978.12" y="124.76" width="3.70" height="1.6" fill="#dcdcaa"/><rect x="1981.82" y="124.76" width="0.74" height="1.6" fill="#ffd700"/><rect x="1982.56" y="124.76" width="0.74" height="1.6" fill="#569cd6"/><rect x="1983.30" y="124.76" width="4.44" height="1.6" fill="#ce9178"/><rect x="1988.48" y="124.76" width="5.18" height="1.6" fill="#ce9178"/><rect x="1994.40" y="124.76" width="3.70" height="1.6" fill="#ce9178"/><rect x="1998.84" y="124.76" width="0.74" height="1.6" fill="#da70d6"/><rect x="1999.58" y="124.76" width="0.74" height="1.6" fill="#9cdcfe"/><rect x="2000.32" y="124.76" width="0.74" height="1.6" fill="#da70d6"/><rect x="2001.06" y="124.76" width="0.74" height="1.6" fill="#ce9178"/><rect x="2001.80" y="124.76" width="0.74" height="1.6" fill="#ffd700"/><rect x="1978.12" y="126.23" width="2.22" height="1.6" fill="#4ec9b0"/><rect x="1980.34" y="126.23" width="0.74" height="1.6" fill="#d4d4d4"/><rect x="1981.08" y="126.23" width="2.96" height="1.6" fill="#dcdcaa"/><rect x="1984.04" y="126.23" width="0.74" height="1.6" fill="#ffd700"/><rect x="1984.78" y="126.23" width="0.74" height="1.6" fill="#b5cea8"/><rect x="1985.52" y="126.23" width="0.74" height="1.6" fill="#ffd700"/><rect x="1972.20" y="130.66" width="2.22" height="1.6" fill="#569cd6"/><rect x="1975.16" y="130.66" width="14.80" height="1.6" fill="#dcdcaa"/><rect x="1989.96" y="130.66" width="0.74" height="1.6" fill="#ffd700"/><rect x="1990.70" y="130.66" width="11.10" height="1.6" fill="#9cdcfe"/><rect x="2001.80" y="130.66" width="0.74" height="1.6" fill="#d4d4d4"/><rect x="2003.28" y="130.66" width="7.40" height="1.6" fill="#9cdcfe"/><rect x="2010.68" y="130.66" width="0.74" height="1.6" fill="#d4d4d4"/><rect x="2012.16" y="130.66" width="7.40" height="1.6" fill="#9cdcfe"/><rect x="2019.56" y="130.66" width="0.74" height="1.6" fill="#d4d4d4"/><rect x="2021.04" y="130.66" width="2.22" height="1.6" fill="#9cdcfe"/><rect x="2023.26" y="130.66" width="0.74" height="1.6" fill="#ffd700"/><rect x="2024.00" y="130.66" width="0.74" height="1.6" fill="#d4d4d4"/><rect x="1975.16" y="132.14" width="7.40" height="1.6" fill="#ce9178"/><rect x="1983.30" y="132.14" width="5.92" height="1.6" fill="#ce9178"/><rect x="1989.96" y="132.14" width="5.92" height="1.6" fill="#ce9178"/><rect x="1996.62" y="132.14" width="2.22" height="1.6" fill="#ce9178"/><rect x="1999.58" y="132.14" width="6.66" height="1.6" fill="#ce9178"/><rect x="2006.98" y="132.14" width="7.40" height="1.6" fill="#ce9178"/><rect x="1975.16" y="135.09" width="0.74" height="1.6" fill="#6a9955"/><rect x="1976.64" y="135.09" width="4.44" height="1.6" fill="#6a9955"/><rect x="1981.82" y="135.09" width="4.44" height="1.6" fill="#6a9955"/><rect x="1987.00" y="135.09" width="2.96" height="1.6" fill="#6a9955"/><rect x="1990.70" y="135.09" width="4.44" height="1.6" fill="#6a9955"/><rect x="1995.88" y="135.09" width="2.96" height="1.6" fill="#6a9955"/><rect x="1999.58" y="135.09" width="1.48" height="1.6" fill="#6a9955"/><rect x="2001.80" y="135.09" width="2.96" height="1.6" fill="#6a9955"/><rect x="2005.50" y="135.09" width="2.96" height="1.6" fill="#6a9955"/><rect x="2009.20" y="135.09" width="5.18" height="1.6" fill="#6a9955"/><rect x="2015.12" y="135.09" width="1.48" height="1.6" fill="#6a9955"/><rect x="2017.34" y="135.09" width="2.22" height="1.6" fill="#6a9955"/><rect x="2020.30" y="135.09" width="2.96" height="1.6" fill="#6a9955"/><rect x="1975.16" y="138.05" width="2.22" height="1.6" fill="#9cdcfe"/><rect x="1977.38" y="138.05" width="0.74" height="1.6" fill="#d4d4d4"/><rect x="1978.86" y="138.05" width="1.48" height="1.6" fill="#9cdcfe"/><rect x="1981.08" y="138.05" width="0.74" height="1.6" fill="#d4d4d4"/><rect x="1982.56" y="138.05" width="2.22" height="1.6" fill="#4ec9b0"/><rect x="1984.78" y="138.05" width="0.74" height="1.6" fill="#d4d4d4"/><rect x="1985.52" y="138.05" width="5.92" height="1.6" fill="#dcdcaa"/><rect x="1991.44" y="138.05" width="0.74" height="1.6" fill="#ffd700"/><rect x="1992.18" y="138.05" width="5.18" height="1.6" fill="#9cdcfe"/><rect x="1997.36" y="138.05" width="0.74" height="1.6" fill="#d4d4d4"/><rect x="1998.10" y="138.05" width="0.74" height="1.6" fill="#da70d6"/><rect x="1998.84" y="138.05" width="1.48" height="1.6" fill="#b5cea8"/><rect x="2000.32" y="138.05" width="0.74" height="1.6" fill="#d4d4d4"/><rect x="2001.80" y="138.05" width="0.74" height="1.6" fill="#b5cea8"/><rect x="2002.54" y="138.05" width="0.74" height="1.6" fill="#da70d6"/><rect x="2003.28" y="138.05" width="0.74" height="1.6" fill="#ffd700"/><rect x="1975.16" y="141.00" width="0.74" height="1.6" fill="#6a9955"/><rect x="1976.64" y="141.00" width="6.66" height="1.6" fill="#6a9955"/><rect x="1984.04" y="141.00" width="7.40" height="1.6" fill="#6a9955"/><rect x="1992.18" y="141.00" width="2.22" height="1.6" fill="#6a9955"/><rect x="1995.14" y="141.00" width="2.22" height="1.6" fill="#6a9955"/><rect x="1998.10" y="141.00" width="3.70" height="1.6" fill="#6a9955"/><rect x="2002.54" y="141.00" width="2.96" height="1.6" fill="#6a9955"/><rect x="2006.24" y="141.00" width="4.44" height="1.6" fill="#6a9955"/><rect x="1975.16" y="142.48" width="5.18" height="1.6" fill="#9cdcfe"/><rect x="1981.08" y="142.48" width="0.74" height="1.6" fill="#d4d4d4"/><rect x="1982.56" y="142.48" width="1.48" height="1.6" fill="#4ec9b0"/><rect x="1984.04" y="142.48" width="0.74" height="1.6" fill="#d4d4d4"/><rect x="1984.78" y="142.48" width="2.22" height="1.6" fill="#dcdcaa"/><rect x="1987.00" y="142.48" width="0.74" height="1.6" fill="#ffd700"/><rect x="1987.74" y="142.48" width="7.40" height="1.6" fill="#9cdcfe"/><rect x="1995.14" y="142.48" width="0.74" height="1.6" fill="#ffd700"/><rect x="1975.16" y="143.96" width="5.18" height="1.6" fill="#9cdcfe"/><rect x="1981.08" y="143.96" width="0.74" height="1.6" fill="#d4d4d4"/><rect x="1982.56" y="143.96" width="1.48" height="1.6" fill="#4ec9b0"/><rect x="1984.04" y="143.96" width="0.74" height="1.6" fill="#d4d4d4"/><rect x="1984.78" y="143.96" width="2.22" height="1.6" fill="#dcdcaa"/><rect x="1987.00" y="143.96" width="0.74" height="1.6" fill="#ffd700"/><rect x="1987.74" y="143.96" width="7.40" height="1.6" fill="#9cdcfe"/><rect x="1995.14" y="143.96" width="0.74" height="1.6" fill="#ffd700"/><rect x="1975.16" y="145.43" width="5.92" height="1.6" fill="#9cdcfe"/><rect x="1981.82" y="145.43" width="0.74" height="1.6" fill="#d4d4d4"/><rect x="1983.30" y="145.43" width="1.48" height="1.6" fill="#4ec9b0"/><rect x="1984.78" y="145.43" width="0.74" height="1.6" fill="#d4d4d4"/><rect x="1985.52" y="145.43" width="2.96" height="1.6" fill="#dcdcaa"/><rect x="1988.48" y="145.43" width="0.74" height="1.6" fill="#ffd700"/><rect x="1989.22" y="145.43" width="7.40" height="1.6" fill="#9cdcfe"/><rect x="1996.62" y="145.43" width="0.74" height="1.6" fill="#ffd700"/><rect x="1975.16" y="146.91" width="5.18" height="1.6" fill="#9cdcfe"/><rect x="1981.08" y="146.91" width="0.74" height="1.6" fill="#d4d4d4"/><rect x="1982.56" y="146.91" width="1.48" height="1.6" fill="#4ec9b0"/><rect x="1984.04" y="146.91" width="0.74" height="1.6" fill="#d4d4d4"/><rect x="1984.78" y="146.91" width="2.22" height="1.6" fill="#dcdcaa"/><rect x="1987.00" y="146.91" width="0.74" height="1.6" fill="#ffd700"/><rect x="1987.74" y="146.91" width="7.40" height="1.6" fill="#9cdcfe"/><rect x="1995.14" y="146.91" width="0.74" height="1.6" fill="#ffd700"/><rect x="1975.16" y="149.87" width="1.48" height="1.6" fill="#9cdcfe"/><rect x="1976.64" y="149.87" width="0.74" height="1.6" fill="#d4d4d4"/><rect x="1977.38" y="149.87" width="2.96" height="1.6" fill="#dcdcaa"/><rect x="1980.34" y="149.87" width="0.74" height="1.6" fill="#ffd700"/><rect x="1981.08" y="149.87" width="1.48" height="1.6" fill="#4ec9b0"/><rect x="1982.56" y="149.87" width="0.74" height="1.6" fill="#d4d4d4"/><rect x="1983.30" y="149.87" width="4.44" height="1.6" fill="#dcdcaa"/><rect x="1987.74" y="149.87" width="0.74" height="1.6" fill="#da70d6"/><rect x="1988.48" y="149.87" width="2.22" height="1.6" fill="#dcdcaa"/><rect x="1990.70" y="149.87" width="0.74" height="1.6" fill="#179fff"/><rect x="1991.44" y="149.87" width="7.40" height="1.6" fill="#9cdcfe"/><rect x="1998.84" y="149.87" width="0.74" height="1.6" fill="#179fff"/><rect x="1999.58" y="149.87" width="0.74" height="1.6" fill="#da70d6"/><rect x="2000.32" y="149.87" width="0.74" height="1.6" fill="#d4d4d4"/><rect x="2001.80" y="149.87" width="7.40" height="1.6" fill="#9cdcfe"/><rect x="2009.20" y="149.87" width="0.74" height="1.6" fill="#d4d4d4"/><rect x="2010.68" y="149.87" width="1.48" height="1.6" fill="#9cdcfe"/><rect x="2012.16" y="149.87" width="0.74" height="1.6" fill="#d4d4d4"/><rect x="2012.90" y="149.87" width="2.22" height="1.6" fill="#b5cea8"/><rect x="2015.12" y="149.87" width="0.74" height="1.6" fill="#ffd700"/><rect x="1975.16" y="151.34" width="1.48" height="1.6" fill="#9cdcfe"/><rect x="1976.64" y="151.34" width="0.74" height="1.6" fill="#d4d4d4"/><rect x="1977.38" y="151.34" width="2.96" height="1.6" fill="#dcdcaa"/><rect x="1980.34" y="151.34" width="0.74" height="1.6" fill="#ffd700"/><rect x="1981.08" y="151.34" width="2.96" height="1.6" fill="#569cd6"/><rect x="1984.04" y="151.34" width="0.74" height="1.6" fill="#d4d4d4"/><rect x="1985.52" y="151.34" width="3.70" height="1.6" fill="#9cdcfe"/><rect x="1989.22" y="151.34" width="0.74" height="1.6" fill="#d4d4d4"/><rect x="1989.96" y="151.34" width="2.22" height="1.6" fill="#b5cea8"/><rect x="1992.18" y="151.34" width="0.74" height="1.6" fill="#ffd700"/><rect x="1975.16" y="154.30" width="0.74" height="1.6" fill="#6a9955"/><rect x="1976.64" y="154.30" width="5.18" height="1.6" fill="#6a9955"/><rect x="1982.56" y="154.30" width="2.22" height="1.6" fill="#6a9955"/><rect x="1985.52" y="154.30" width="3.70" height="1.6" fill="#6a9955"/><rect x="1989.96" y="154.30" width="2.22" height="1.6" fill="#6a9955"/><rect x="1992.92" y="154.30" width="4.44" height="1.6" fill="#6a9955"/><rect x="1998.10" y="154.30" width="6.66" height="1.6" fill="#6a9955"/><rect x="2005.50" y="154.30" width="1.48" height="1.6" fill="#6a9955"/><rect x="2007.72" y="154.30" width="2.22" height="1.6" fill="#6a9955"/><rect x="2010.68" y="154.30" width="3.70" height="1.6" fill="#6a9955"/><rect x="2015.12" y="154.30" width="2.96" height="1.6" fill="#6a9955"/><rect x="2018.82" y="154.30" width="6.66" height="1.6" fill="#6a9955"/><rect x="1975.16" y="155.77" width="3.70" height="1.6" fill="#9cdcfe"/><rect x="1979.60" y="155.77" width="0.74" height="1.6" fill="#d4d4d4"/><rect x="1981.08" y="155.77" width="0.74" height="1.6" fill="#569cd6"/><rect x="1981.82" y="155.77" width="7.40" height="1.6" fill="#ce9178"/><rect x="1989.96" y="155.77" width="0.74" height="1.6" fill="#ffd700"/><rect x="1990.70" y="155.77" width="7.40" height="1.6" fill="#9cdcfe"/><rect x="1998.10" y="155.77" width="0.74" height="1.6" fill="#ffd700"/><rect x="1998.84" y="155.77" width="0.74" height="1.6" fill="#ce9178"/><rect x="1975.16" y="157.25" width="1.48" height="1.6" fill="#9cdcfe"/><rect x="1976.64" y="157.25" width="0.74" height="1.6" fill="#d4d4d4"/><rect x="1977.38" y="157.25" width="7.40" height="1.6" fill="#dcdcaa"/><rect x="1984.78" y="157.25" width="0.74" height="1.6" fill="#ffd700"/><rect x="1985.52" y="157.25" width="4.44" height="1.6" fill="#ce9178"/><rect x="1990.70" y="157.25" width="8.14" height="1.6" fill="#ce9178"/><rect x="1998.84" y="157.25" width="0.74" height="1.6" fill="#d4d4d4"/><rect x="2000.32" y="157.25" width="5.92" height="1.6" fill="#9cdcfe"/><rect x="2006.24" y="157.25" width="0.74" height="1.6" fill="#d4d4d4"/><rect x="2006.98" y="157.25" width="1.48" height="1.6" fill="#b5cea8"/><rect x="2008.46" y="157.25" width="0.74" height="1.6" fill="#ffd700"/><rect x="1975.16" y="160.20" width="1.48" height="1.6" fill="#9cdcfe"/><rect x="1976.64" y="160.20" width="0.74" height="1.6" fill="#d4d4d4"/><rect x="1977.38" y="160.20" width="7.40" height="1.6" fill="#dcdcaa"/><rect x="1984.78" y="160.20" width="0.74" height="1.6" fill="#ffd700"/><rect x="1985.52" y="160.20" width="8.14" height="1.6" fill="#ce9178"/><rect x="1993.66" y="160.20" width="0.74" height="1.6" fill="#d4d4d4"/><rect x="1995.14" y="160.20" width="5.92" height="1.6" fill="#9cdcfe"/><rect x="2001.06" y="160.20" width="0.74" height="1.6" fill="#d4d4d4"/><rect x="2001.80" y="160.20" width="1.48" height="1.6" fill="#b5cea8"/><rect x="2003.28" y="160.20" width="0.74" height="1.6" fill="#ffd700"/><rect x="1975.16" y="163.16" width="0.74" height="1.6" fill="#6a9955"/><rect x="1976.64" y="163.16" width="7.40" height="1.6" fill="#6a9955"/><rect x="1975.16" y="164.63" width="3.70" height="1.6" fill="#9cdcfe"/><rect x="1979.60" y="164.63" width="0.74" height="1.6" fill="#d4d4d4"/><rect x="1981.08" y="164.63" width="0.74" height="1.6" fill="#569cd6"/><rect x="1981.82" y="164.63" width="3.70" height="1.6" fill="#ce9178"/><rect x="1986.26" y="164.63" width="0.74" height="1.6" fill="#ffd700"/><rect x="1987.00" y="164.63" width="5.18" height="1.6" fill="#9cdcfe"/><rect x="1992.18" y="164.63" width="1.48" height="1.6" fill="#d4d4d4"/><rect x="1993.66" y="164.63" width="0.74" height="1.6" fill="#b5cea8"/><rect x="1994.40" y="164.63" width="0.74" height="1.6" fill="#9cdcfe"/><rect x="1995.14" y="164.63" width="0.74" height="1.6" fill="#ffd700"/><rect x="1995.88" y="164.63" width="0.74" height="1.6" fill="#ce9178"/><rect x="1975.16" y="166.11" width="3.70" height="1.6" fill="#9cdcfe"/><rect x="1979.60" y="166.11" width="1.48" height="1.6" fill="#d4d4d4"/><rect x="1981.82" y="166.11" width="0.74" height="1.6" fill="#569cd6"/><rect x="1982.56" y="166.11" width="3.70" height="1.6" fill="#ce9178"/><rect x="1987.00" y="166.11" width="0.74" height="1.6" fill="#ffd700"/><rect x="1987.74" y="166.11" width="5.18" height="1.6" fill="#9cdcfe"/><rect x="1992.92" y="166.11" width="1.48" height="1.6" fill="#d4d4d4"/><rect x="1994.40" y="166.11" width="0.74" height="1.6" fill="#b5cea8"/><rect x="1995.14" y="166.11" width="0.74" height="1.6" fill="#9cdcfe"/><rect x="1995.88" y="166.11" width="0.74" height="1.6" fill="#ffd700"/><rect x="1996.62" y="166.11" width="0.74" height="1.6" fill="#ce9178"/><rect x="1975.16" y="167.59" width="3.70" height="1.6" fill="#9cdcfe"/><rect x="1979.60" y="167.59" width="1.48" height="1.6" fill="#d4d4d4"/><rect x="1981.82" y="167.59" width="0.74" height="1.6" fill="#569cd6"/><rect x="1982.56" y="167.59" width="4.44" height="1.6" fill="#ce9178"/><rect x="1987.74" y="167.59" width="0.74" height="1.6" fill="#ffd700"/><rect x="1988.48" y="167.59" width="5.92" height="1.6" fill="#9cdcfe"/><rect x="1994.40" y="167.59" width="1.48" height="1.6" fill="#d4d4d4"/><rect x="1995.88" y="167.59" width="0.74" height="1.6" fill="#b5cea8"/><rect x="1996.62" y="167.59" width="0.74" height="1.6" fill="#9cdcfe"/><rect x="1997.36" y="167.59" width="0.74" height="1.6" fill="#ffd700"/><rect x="1998.10" y="167.59" width="0.74" height="1.6" fill="#ce9178"/><rect x="1975.16" y="169.07" width="3.70" height="1.6" fill="#9cdcfe"/><rect x="1979.60" y="169.07" width="1.48" height="1.6" fill="#d4d4d4"/><rect x="1981.82" y="169.07" width="0.74" height="1.6" fill="#569cd6"/><rect x="1982.56" y="169.07" width="3.70" height="1.6" fill="#ce9178"/><rect x="1987.00" y="169.07" width="0.74" height="1.6" fill="#ffd700"/><rect x="1987.74" y="169.07" width="5.18" height="1.6" fill="#9cdcfe"/><rect x="1992.92" y="169.07" width="1.48" height="1.6" fill="#d4d4d4"/><rect x="1994.40" y="169.07" width="0.74" height="1.6" fill="#b5cea8"/><rect x="1995.14" y="169.07" width="0.74" height="1.6" fill="#9cdcfe"/><rect x="1995.88" y="169.07" width="0.74" height="1.6" fill="#ffd700"/><rect x="1996.62" y="169.07" width="0.74" height="1.6" fill="#ce9178"/><rect x="1975.16" y="170.54" width="1.48" height="1.6" fill="#9cdcfe"/><rect x="1976.64" y="170.54" width="0.74" height="1.6" fill="#d4d4d4"/><rect x="1977.38" y="170.54" width="2.96" height="1.6" fill="#dcdcaa"/><rect x="1980.34" y="170.54" width="0.74" height="1.6" fill="#ffd700"/><rect x="1981.08" y="170.54" width="2.96" height="1.6" fill="#b5cea8"/><rect x="1984.04" y="170.54" width="0.74" height="1.6" fill="#d4d4d4"/><rect x="1985.52" y="170.54" width="2.96" height="1.6" fill="#b5cea8"/><rect x="1988.48" y="170.54" width="0.74" height="1.6" fill="#d4d4d4"/><rect x="1989.96" y="170.54" width="3.70" height="1.6" fill="#9cdcfe"/><rect x="1993.66" y="170.54" width="0.74" height="1.6" fill="#ffd700"/><rect x="1975.16" y="172.02" width="1.48" height="1.6" fill="#9cdcfe"/><rect x="1976.64" y="172.02" width="0.74" height="1.6" fill="#d4d4d4"/><rect x="1977.38" y="172.02" width="4.44" height="1.6" fill="#dcdcaa"/><rect x="1981.82" y="172.02" width="0.74" height="1.6" fill="#ffd700"/><rect x="1982.56" y="172.02" width="0.74" height="1.6" fill="#ffd700"/><rect x="1975.16" y="174.97" width="0.74" height="1.6" fill="#6a9955"/><rect x="1976.64" y="174.97" width="2.22" height="1.6" fill="#6a9955"/><rect x="1979.60" y="174.97" width="3.70" height="1.6" fill="#6a9955"/><rect x="1984.04" y="174.97" width="3.70" height="1.6" fill="#6a9955"/><rect x="1988.48" y="174.97" width="1.48" height="1.6" fill="#6a9955"/><rect x="1990.70" y="174.97" width="3.70" height="1.6" fill="#6a9955"/><rect x="1995.14" y="174.97" width="2.96" height="1.6" fill="#6a9955"/><rect x="1998.84" y="174.97" width="2.22" height="1.6" fill="#6a9955"/><rect x="2001.80" y="174.97" width="5.92" height="1.6" fill="#6a9955"/><rect x="1975.16" y="176.45" width="1.48" height="1.6" fill="#c586c0"/><rect x="1977.38" y="176.45" width="7.40" height="1.6" fill="#9cdcfe"/><rect x="1985.52" y="176.45" width="1.48" height="1.6" fill="#d4d4d4"/><rect x="1987.74" y="176.45" width="3.70" height="1.6" fill="#ce9178"/><rect x="1991.44" y="176.45" width="0.74" height="1.6" fill="#d4d4d4"/><rect x="1978.12" y="177.93" width="3.70" height="1.6" fill="#9cdcfe"/><rect x="1982.56" y="177.93" width="0.74" height="1.6" fill="#d4d4d4"/><rect x="1984.04" y="177.93" width="0.74" height="1.6" fill="#569cd6"/><rect x="1984.78" y="177.93" width="7.40" height="1.6" fill="#ce9178"/><rect x="1992.92" y="177.93" width="4.44" height="1.6" fill="#ce9178"/><rect x="1998.10" y="177.93" width="2.22" height="1.6" fill="#ce9178"/><rect x="2001.06" y="177.93" width="2.22" height="1.6" fill="#ce9178"/><rect x="2004.02" y="177.93" width="0.74" height="1.6" fill="#ffd700"/><rect x="2004.76" y="177.93" width="2.22" height="1.6" fill="#9cdcfe"/><rect x="2006.98" y="177.93" width="0.74" height="1.6" fill="#ffd700"/><rect x="2008.46" y="177.93" width="5.18" height="1.6" fill="#ce9178"/><rect x="2014.38" y="177.93" width="3.70" height="1.6" fill="#ce9178"/><rect x="1975.16" y="179.41" width="2.96" height="1.6" fill="#c586c0"/><rect x="1978.12" y="179.41" width="0.74" height="1.6" fill="#d4d4d4"/><rect x="1978.12" y="180.88" width="3.70" height="1.6" fill="#9cdcfe"/><rect x="1982.56" y="180.88" width="0.74" height="1.6" fill="#d4d4d4"/><rect x="1984.04" y="180.88" width="4.44" height="1.6" fill="#ce9178"/><rect x="1978.12" y="182.36" width="1.48" height="1.6" fill="#9cdcfe"/><rect x="1979.60" y="182.36" width="0.74" height="1.6" fill="#d4d4d4"/><rect x="1980.34" y="182.36" width="6.66" height="1.6" fill="#dcdcaa"/><rect x="1987.00" y="182.36" width="0.74" height="1.6" fill="#ffd700"/><rect x="1987.74" y="182.36" width="0.74" height="1.6" fill="#569cd6"/><rect x="1988.48" y="182.36" width="7.40" height="1.6" fill="#ce9178"/><rect x="1996.62" y="182.36" width="3.70" height="1.6" fill="#ce9178"/><rect x="2001.06" y="182.36" width="5.92" height="1.6" fill="#ce9178"/><rect x="2007.72" y="182.36" width="8.14" height="1.6" fill="#ce9178"/><rect x="2016.60" y="182.36" width="1.48" height="1.6" fill="#ce9178"/><rect x="2018.82" y="182.36" width="9.62" height="1.6" fill="#ce9178"/><rect x="2028.44" y="182.36" width="0.74" height="1.6" fill="#ffd700"/><rect x="1975.16" y="183.84" width="2.96" height="1.6" fill="#c586c0"/><rect x="1978.12" y="183.84" width="0.74" height="1.6" fill="#d4d4d4"/><rect x="1978.12" y="185.31" width="1.48" height="1.6" fill="#9cdcfe"/><rect x="1979.60" y="185.31" width="0.74" height="1.6" fill="#d4d4d4"/><rect x="1980.34" y="185.31" width="6.66" height="1.6" fill="#dcdcaa"/><rect x="1987.00" y="185.31" width="0.74" height="1.6" fill="#ffd700"/><rect x="1987.74" y="185.31" width="0.74" height="1.6" fill="#569cd6"/><rect x="1988.48" y="185.31" width="7.40" height="1.6" fill="#ce9178"/><rect x="1996.62" y="185.31" width="4.44" height="1.6" fill="#ce9178"/><rect x="2001.80" y="185.31" width="3.70" height="1.6" fill="#ce9178"/><rect x="2006.24" y="185.31" width="5.92" height="1.6" fill="#ce9178"/><rect x="2012.90" y="185.31" width="4.44" height="1.6" fill="#ce9178"/><rect x="2017.34" y="185.31" width="0.74" height="1.6" fill="#ffd700"/><rect x="1975.16" y="188.27" width="0.74" height="1.6" fill="#6a9955"/><rect x="1976.64" y="188.27" width="2.96" height="1.6" fill="#6a9955"/><rect x="1980.34" y="188.27" width="2.96" height="1.6" fill="#6a9955"/><rect x="1984.04" y="188.27" width="1.48" height="1.6" fill="#6a9955"/><rect x="1986.26" y="188.27" width="2.96" height="1.6" fill="#6a9955"/><rect x="1989.96" y="188.27" width="2.96" height="1.6" fill="#6a9955"/><rect x="1993.66" y="188.27" width="3.70" height="1.6" fill="#6a9955"/><rect x="1998.10" y="188.27" width="8.14" height="1.6" fill="#6a9955"/><rect x="1975.16" y="189.74" width="8.14" height="1.6" fill="#9cdcfe"/><rect x="1984.04" y="189.74" width="0.74" height="1.6" fill="#d4d4d4"/><rect x="1985.52" y="189.74" width="0.74" height="1.6" fill="#569cd6"/><rect x="1986.26" y="189.74" width="8.14" height="1.6" fill="#ce9178"/><rect x="1994.40" y="189.74" width="0.74" height="1.6" fill="#ffd700"/><rect x="1995.14" y="189.74" width="7.40" height="1.6" fill="#9cdcfe"/><rect x="2002.54" y="189.74" width="0.74" height="1.6" fill="#ffd700"/><rect x="2003.28" y="189.74" width="0.74" height="1.6" fill="#ce9178"/><rect x="2004.02" y="189.74" width="0.74" height="1.6" fill="#ffd700"/><rect x="2004.76" y="189.74" width="2.22" height="1.6" fill="#9cdcfe"/><rect x="2006.98" y="189.74" width="0.74" height="1.6" fill="#ffd700"/><rect x="2007.72" y="189.74" width="3.70" height="1.6" fill="#ce9178"/><rect x="1975.16" y="191.22" width="2.22" height="1.6" fill="#4ec9b0"/><rect x="1977.38" y="191.22" width="0.74" height="1.6" fill="#d4d4d4"/><rect x="1978.12" y="191.22" width="5.18" height="1.6" fill="#dcdcaa"/><rect x="1983.30" y="191.22" width="0.74" height="1.6" fill="#ffd700"/><rect x="1984.04" y="191.22" width="8.14" height="1.6" fill="#9cdcfe"/><rect x="1992.18" y="191.22" width="0.74" height="1.6" fill="#d4d4d4"/><rect x="1993.66" y="191.22" width="2.22" height="1.6" fill="#9cdcfe"/><rect x="1995.88" y="191.22" width="0.74" height="1.6" fill="#d4d4d4"/><rect x="1996.62" y="191.22" width="2.22" height="1.6" fill="#b5cea8"/><rect x="1998.84" y="191.22" width="0.74" height="1.6" fill="#d4d4d4"/><rect x="2000.32" y="191.22" width="8.14" height="1.6" fill="#9cdcfe"/><rect x="2008.46" y="191.22" width="0.74" height="1.6" fill="#d4d4d4"/><rect x="2009.20" y="191.22" width="5.18" height="1.6" fill="#ce9178"/><rect x="2014.38" y="191.22" width="0.74" height="1.6" fill="#ffd700"/><rect x="1978.12" y="192.70" width="3.70" height="1.6" fill="#dcdcaa"/><rect x="1981.82" y="192.70" width="0.74" height="1.6" fill="#ffd700"/><rect x="1982.56" y="192.70" width="0.74" height="1.6" fill="#569cd6"/><rect x="1983.30" y="192.70" width="3.70" height="1.6" fill="#ce9178"/><rect x="1987.74" y="192.70" width="3.70" height="1.6" fill="#ce9178"/><rect x="1992.18" y="192.70" width="2.22" height="1.6" fill="#ce9178"/><rect x="1995.14" y="192.70" width="0.74" height="1.6" fill="#da70d6"/><rect x="1995.88" y="192.70" width="8.14" height="1.6" fill="#9cdcfe"/><rect x="2004.02" y="192.70" width="0.74" height="1.6" fill="#da70d6"/><rect x="2004.76" y="192.70" width="0.74" height="1.6" fill="#ce9178"/><rect x="2005.50" y="192.70" width="0.74" height="1.6" fill="#ffd700"/><rect x="1975.16" y="194.18" width="2.22" height="1.6" fill="#4ec9b0"/><rect x="1977.38" y="194.18" width="0.74" height="1.6" fill="#d4d4d4"/><rect x="1978.12" y="194.18" width="2.96" height="1.6" fill="#dcdcaa"/><rect x="1981.08" y="194.18" width="0.74" height="1.6" fill="#ffd700"/><rect x="1981.82" y="194.18" width="0.74" height="1.6" fill="#ffd700"/><rect x="1975.16" y="197.13" width="2.22" height="1.6" fill="#4ec9b0"/><rect x="1977.38" y="197.13" width="0.74" height="1.6" fill="#d4d4d4"/><rect x="1978.12" y="197.13" width="8.88" height="1.6" fill="#dcdcaa"/><rect x="1987.00" y="197.13" width="0.74" height="1.6" fill="#ffd700"/><rect x="1987.74" y="197.13" width="0.74" height="1.6" fill="#ffd700"/><rect x="1975.16" y="198.61" width="2.22" height="1.6" fill="#4ec9b0"/><rect x="1977.38" y="198.61" width="0.74" height="1.6" fill="#d4d4d4"/><rect x="1978.12" y="198.61" width="3.70" height="1.6" fill="#dcdcaa"/><rect x="1981.82" y="198.61" width="0.74" height="1.6" fill="#ffd700"/><rect x="1982.56" y="198.61" width="2.22" height="1.6" fill="#9cdcfe"/><rect x="1984.78" y="198.61" width="0.74" height="1.6" fill="#ffd700"/><rect x="1975.16" y="200.08" width="4.44" height="1.6" fill="#c586c0"/><rect x="1980.34" y="200.08" width="2.22" height="1.6" fill="#9cdcfe"/><rect x="1972.20" y="205.99" width="2.22" height="1.6" fill="#569cd6"/><rect x="1975.16" y="205.99" width="13.32" height="1.6" fill="#dcdcaa"/><rect x="1988.48" y="205.99" width="0.74" height="1.6" fill="#ffd700"/><rect x="1989.22" y="205.99" width="11.10" height="1.6" fill="#9cdcfe"/><rect x="2000.32" y="205.99" width="0.74" height="1.6" fill="#ffd700"/><rect x="2001.06" y="205.99" width="0.74" height="1.6" fill="#d4d4d4"/><rect x="1975.16" y="207.47" width="7.40" height="1.6" fill="#ce9178"/><rect x="1983.30" y="207.47" width="5.92" height="1.6" fill="#ce9178"/><rect x="1989.96" y="207.47" width="3.70" height="1.6" fill="#ce9178"/><rect x="1994.40" y="207.47" width="2.96" height="1.6" fill="#ce9178"/><rect x="1998.10" y="207.47" width="7.40" height="1.6" fill="#ce9178"/><rect x="2006.24" y="207.47" width="1.48" height="1.6" fill="#ce9178"/><rect x="2008.46" y="207.47" width="8.14" height="1.6" fill="#ce9178"/><rect x="2017.34" y="207.47" width="7.40" height="1.6" fill="#ce9178"/><rect x="1975.16" y="208.94" width="2.96" height="1.6" fill="#9cdcfe"/><rect x="1978.12" y="208.94" width="0.74" height="1.6" fill="#d4d4d4"/><rect x="1979.60" y="208.94" width="2.96" height="1.6" fill="#9cdcfe"/><rect x="1983.30" y="208.94" width="0.74" height="1.6" fill="#d4d4d4"/><rect x="1984.78" y="208.94" width="11.10" height="1.6" fill="#9cdcfe"/><rect x="1995.88" y="208.94" width="0.74" height="1.6" fill="#d4d4d4"/><rect x="1996.62" y="208.94" width="3.70" height="1.6" fill="#9cdcfe"/><rect x="1975.16" y="211.90" width="0.74" height="1.6" fill="#6a9955"/><rect x="1976.64" y="211.90" width="2.22" height="1.6" fill="#6a9955"/><rect x="1979.60" y="211.90" width="0.74" height="1.6" fill="#6a9955"/><rect x="1981.08" y="211.90" width="8.14" height="1.6" fill="#6a9955"/><rect x="1989.96" y="211.90" width="4.44" height="1.6" fill="#6a9955"/><rect x="1995.14" y="211.90" width="2.22" height="1.6" fill="#6a9955"/><rect x="1998.10" y="211.90" width="5.92" height="1.6" fill="#6a9955"/><rect x="2004.76" y="211.90" width="2.96" height="1.6" fill="#6a9955"/><rect x="2008.46" y="211.90" width="2.96" height="1.6" fill="#6a9955"/><rect x="2012.16" y="211.90" width="3.70" height="1.6" fill="#6a9955"/><rect x="2016.60" y="211.90" width="1.48" height="1.6" fill="#6a9955"/><rect x="2018.82" y="211.90" width="5.92" height="1.6" fill="#6a9955"/><rect x="2025.48" y="211.90" width="5.18" height="1.6" fill="#6a9955"/><rect x="1975.16" y="213.38" width="0.74" height="1.6" fill="#6a9955"/><rect x="1976.64" y="213.38" width="1.48" height="1.6" fill="#6a9955"/><rect x="1978.86" y="213.38" width="2.96" height="1.6" fill="#6a9955"/><rect x="1982.56" y="213.38" width="1.48" height="1.6" fill="#6a9955"/><rect x="1984.78" y="213.38" width="2.96" height="1.6" fill="#6a9955"/><rect x="1988.48" y="213.38" width="4.44" height="1.6" fill="#6a9955"/><rect x="1993.66" y="213.38" width="5.18" height="1.6" fill="#6a9955"/><rect x="1999.58" y="213.38" width="1.48" height="1.6" fill="#6a9955"/><rect x="2001.80" y="213.38" width="2.96" height="1.6" fill="#6a9955"/><rect x="2005.50" y="213.38" width="2.96" height="1.6" fill="#6a9955"/><rect x="1975.16" y="216.33" width="0.74" height="1.6" fill="#6a9955"/><rect x="1976.64" y="216.33" width="6.66" height="1.6" fill="#6a9955"/><rect x="1984.04" y="216.33" width="2.22" height="1.6" fill="#6a9955"/><rect x="1987.00" y="216.33" width="3.70" height="1.6" fill="#6a9955"/><rect x="1991.44" y="216.33" width="1.48" height="1.6" fill="#6a9955"/><rect x="1993.66" y="216.33" width="2.22" height="1.6" fill="#6a9955"/><rect x="1996.62" y="216.33" width="5.92" height="1.6" fill="#6a9955"/><rect x="2003.28" y="216.33" width="2.96" height="1.6" fill="#6a9955"/><rect x="1975.16" y="217.81" width="3.70" height="1.6" fill="#9cdcfe"/><rect x="1979.60" y="217.81" width="0.74" height="1.6" fill="#d4d4d4"/><rect x="1981.08" y="217.81" width="0.74" height="1.6" fill="#ffd700"/><rect x="1981.82" y="217.81" width="2.96" height="1.6" fill="#9cdcfe"/><rect x="1985.52" y="217.81" width="0.74" height="1.6" fill="#d4d4d4"/><rect x="1987.00" y="217.81" width="0.74" height="1.6" fill="#b5cea8"/><rect x="1987.74" y="217.81" width="0.74" height="1.6" fill="#ffd700"/><rect x="1989.22" y="217.81" width="0.74" height="1.6" fill="#d4d4d4"/><rect x="1990.70" y="217.81" width="0.74" height="1.6" fill="#ffd700"/><rect x="1991.44" y="217.81" width="2.96" height="1.6" fill="#9cdcfe"/><rect x="1995.14" y="217.81" width="0.74" height="1.6" fill="#d4d4d4"/><rect x="1996.62" y="217.81" width="0.74" height="1.6" fill="#b5cea8"/><rect x="1997.36" y="217.81" width="0.74" height="1.6" fill="#ffd700"/><rect x="1998.84" y="217.81" width="1.48" height="1.6" fill="#c586c0"/><rect x="2001.06" y="217.81" width="2.96" height="1.6" fill="#9cdcfe"/><rect x="2004.76" y="217.81" width="0.74" height="1.6" fill="#d4d4d4"/><rect x="2006.24" y="217.81" width="0.74" height="1.6" fill="#b5cea8"/><rect x="2007.72" y="217.81" width="2.96" height="1.6" fill="#c586c0"/><rect x="2011.42" y="217.81" width="0.74" height="1.6" fill="#b5cea8"/><rect x="1975.16" y="220.76" width="0.74" height="1.6" fill="#6a9955"/><rect x="1976.64" y="220.76" width="6.66" height="1.6" fill="#6a9955"/><rect x="1984.04" y="220.76" width="2.22" height="1.6" fill="#6a9955"/><rect x="1987.00" y="220.76" width="4.44" height="1.6" fill="#6a9955"/><rect x="1992.18" y="220.76" width="1.48" height="1.6" fill="#6a9955"/><rect x="1994.40" y="220.76" width="4.44" height="1.6" fill="#6a9955"/><rect x="1999.58" y="220.76" width="1.48" height="1.6" fill="#6a9955"/><rect x="2001.80" y="220.76" width="4.44" height="1.6" fill="#6a9955"/><rect x="1975.16" y="222.24" width="0.74" height="1.6" fill="#6a9955"/><rect x="1976.64" y="222.24" width="3.70" height="1.6" fill="#6a9955"/><rect x="1981.08" y="222.24" width="4.44" height="1.6" fill="#6a9955"/><rect x="1986.26" y="222.24" width="3.70" height="1.6" fill="#6a9955"/><rect x="1990.70" y="222.24" width="2.22" height="1.6" fill="#6a9955"/><rect x="1993.66" y="222.24" width="4.44" height="1.6" fill="#6a9955"/><rect x="1998.84" y="222.24" width="6.66" height="1.6" fill="#6a9955"/><rect x="2006.24" y="222.24" width="1.48" height="1.6" fill="#6a9955"/><rect x="2008.46" y="222.24" width="2.22" height="1.6" fill="#6a9955"/><rect x="2011.42" y="222.24" width="4.44" height="1.6" fill="#6a9955"/><rect x="2016.60" y="222.24" width="5.92" height="1.6" fill="#6a9955"/><rect x="1975.16" y="223.72" width="7.40" height="1.6" fill="#9cdcfe"/><rect x="1983.30" y="223.72" width="0.74" height="1.6" fill="#d4d4d4"/><rect x="1984.78" y="223.72" width="2.22" height="1.6" fill="#dcdcaa"/><rect x="1987.00" y="223.72" width="0.74" height="1.6" fill="#ffd700"/><rect x="1987.74" y="223.72" width="2.96" height="1.6" fill="#9cdcfe"/><rect x="1990.70" y="223.72" width="0.74" height="1.6" fill="#d4d4d4"/><rect x="1992.18" y="223.72" width="2.96" height="1.6" fill="#9cdcfe"/><rect x="1995.14" y="223.72" width="0.74" height="1.6" fill="#ffd700"/><rect x="1975.16" y="226.67" width="9.62" height="1.6" fill="#9cdcfe"/><rect x="1985.52" y="226.67" width="0.74" height="1.6" fill="#d4d4d4"/><rect x="1987.00" y="226.67" width="0.74" height="1.6" fill="#ffd700"/><rect x="1987.74" y="226.67" width="0.74" height="1.6" fill="#ffd700"/><rect x="1975.16" y="229.62" width="2.22" height="1.6" fill="#c586c0"/><rect x="1978.12" y="229.62" width="0.74" height="1.6" fill="#9cdcfe"/><rect x="1979.60" y="229.62" width="1.48" height="1.6" fill="#c586c0"/><rect x="1981.82" y="229.62" width="3.70" height="1.6" fill="#4ec9b0"/><rect x="1985.52" y="229.62" width="0.74" height="1.6" fill="#ffd700"/><rect x="1986.26" y="229.62" width="7.40" height="1.6" fill="#9cdcfe"/><rect x="1993.66" y="229.62" width="0.74" height="1.6" fill="#ffd700"/><rect x="1994.40" y="229.62" width="0.74" height="1.6" fill="#d4d4d4"/><rect x="1978.12" y="231.10" width="0.74" height="1.6" fill="#6a9955"/><rect x="1979.60" y="231.10" width="6.66" height="1.6" fill="#6a9955"/><rect x="1987.00" y="231.10" width="2.22" height="1.6" fill="#6a9955"/><rect x="1989.96" y="231.10" width="5.92" height="1.6" fill="#6a9955"/><rect x="1996.62" y="231.10" width="3.70" height="1.6" fill="#6a9955"/><rect x="2001.06" y="231.10" width="2.22" height="1.6" fill="#6a9955"/><rect x="2004.02" y="231.10" width="5.92" height="1.6" fill="#6a9955"/><rect x="1978.12" y="232.58" width="1.48" height="1.6" fill="#c586c0"/><rect x="1980.34" y="232.58" width="2.96" height="1.6" fill="#9cdcfe"/><rect x="1984.04" y="232.58" width="1.48" height="1.6" fill="#d4d4d4"/><rect x="1986.26" y="232.58" width="2.96" height="1.6" fill="#9cdcfe"/><rect x="1989.22" y="232.58" width="0.74" height="1.6" fill="#d4d4d4"/><rect x="1981.08" y="234.05" width="0.74" height="1.6" fill="#6a9955"/><rect x="1982.56" y="234.05" width="4.44" height="1.6" fill="#6a9955"/><rect x="1987.74" y="234.05" width="3.70" height="1.6" fill="#6a9955"/><rect x="1992.18" y="234.05" width="5.18" height="1.6" fill="#6a9955"/><rect x="1998.10" y="234.05" width="4.44" height="1.6" fill="#6a9955"/><rect x="2003.28" y="234.05" width="4.44" height="1.6" fill="#6a9955"/><rect x="1981.08" y="235.53" width="0.74" height="1.6" fill="#9cdcfe"/><rect x="1982.56" y="235.53" width="0.74" height="1.6" fill="#d4d4d4"/><rect x="1984.04" y="235.53" width="0.74" height="1.6" fill="#9cdcfe"/><rect x="1981.08" y="237.01" width="0.74" height="1.6" fill="#9cdcfe"/><rect x="1982.56" y="237.01" width="0.74" height="1.6" fill="#d4d4d4"/><rect x="1984.04" y="237.01" width="2.22" height="1.6" fill="#4ec9b0"/><rect x="1986.26" y="237.01" width="0.74" height="1.6" fill="#ffd700"/><rect x="1987.00" y="237.01" width="3.70" height="1.6" fill="#9cdcfe"/><rect x="1991.44" y="237.01" width="0.74" height="1.6" fill="#d4d4d4"/><rect x="1992.92" y="237.01" width="0.74" height="1.6" fill="#9cdcfe"/><rect x="1993.66" y="237.01" width="0.74" height="1.6" fill="#ffd700"/><rect x="1978.12" y="238.49" width="2.96" height="1.6" fill="#c586c0"/><rect x="1981.08" y="238.49" width="0.74" height="1.6" fill="#d4d4d4"/><rect x="1981.08" y="239.96" width="0.74" height="1.6" fill="#6a9955"/><rect x="1982.56" y="239.96" width="4.44" height="1.6" fill="#6a9955"/><rect x="1987.74" y="239.96" width="3.70" height="1.6" fill="#6a9955"/><rect x="1992.18" y="239.96" width="2.96" height="1.6" fill="#6a9955"/><rect x="1995.88" y="239.96" width="5.18" height="1.6" fill="#6a9955"/><rect x="2001.80" y="239.96" width="4.44" height="1.6" fill="#6a9955"/><rect x="1981.08" y="241.44" width="0.74" height="1.6" fill="#9cdcfe"/><rect x="1982.56" y="241.44" width="0.74" height="1.6" fill="#d4d4d4"/><rect x="1984.04" y="241.44" width="0.74" height="1.6" fill="#9cdcfe"/><rect x="1981.08" y="242.92" width="0.74" height="1.6" fill="#9cdcfe"/><rect x="1982.56" y="242.92" width="0.74" height="1.6" fill="#d4d4d4"/><rect x="1984.04" y="242.92" width="2.22" height="1.6" fill="#4ec9b0"/><rect x="1986.26" y="242.92" width="0.74" height="1.6" fill="#ffd700"/><rect x="1987.00" y="242.92" width="0.74" height="1.6" fill="#9cdcfe"/><rect x="1988.48" y="242.92" width="0.74" height="1.6" fill="#d4d4d4"/><rect x="1989.96" y="242.92" width="3.70" height="1.6" fill="#9cdcfe"/><rect x="1993.66" y="242.92" width="0.74" height="1.6" fill="#ffd700"/><rect x="1995.14" y="242.92" width="1.48" height="1.6" fill="#c586c0"/><rect x="1997.36" y="242.92" width="3.70" height="1.6" fill="#9cdcfe"/><rect x="2001.80" y="242.92" width="1.48" height="1.6" fill="#d4d4d4"/><rect x="2004.02" y="242.92" width="0.74" height="1.6" fill="#b5cea8"/><rect x="2005.50" y="242.92" width="2.96" height="1.6" fill="#c586c0"/><rect x="2009.20" y="242.92" width="0.74" height="1.6" fill="#b5cea8"/><rect x="1978.12" y="245.87" width="0.74" height="1.6" fill="#6a9955"/><rect x="1979.60" y="245.87" width="4.44" height="1.6" fill="#6a9955"/><rect x="1984.78" y="245.87" width="8.14" height="1.6" fill="#6a9955"/><rect x="1993.66" y="245.87" width="2.22" height="1.6" fill="#6a9955"/><rect x="1996.62" y="245.87" width="4.44" height="1.6" fill="#6a9955"/><rect x="2001.80" y="245.87" width="4.44" height="1.6" fill="#6a9955"/><rect x="1978.12" y="247.35" width="0.74" height="1.6" fill="#9cdcfe"/><rect x="1979.60" y="247.35" width="0.74" height="1.6" fill="#d4d4d4"/><rect x="1981.08" y="247.35" width="2.22" height="1.6" fill="#dcdcaa"/><rect x="1983.30" y="247.35" width="0.74" height="1.6" fill="#ffd700"/><rect x="1984.04" y="247.35" width="2.22" height="1.6" fill="#dcdcaa"/><rect x="1986.26" y="247.35" width="0.74" height="1.6" fill="#da70d6"/><rect x="1987.00" y="247.35" width="0.74" height="1.6" fill="#9cdcfe"/><rect x="1987.74" y="247.35" width="0.74" height="1.6" fill="#d4d4d4"/><rect x="1989.22" y="247.35" width="0.74" height="1.6" fill="#b5cea8"/><rect x="1989.96" y="247.35" width="0.74" height="1.6" fill="#da70d6"/><rect x="1990.70" y="247.35" width="0.74" height="1.6" fill="#d4d4d4"/><rect x="1992.18" y="247.35" width="2.96" height="1.6" fill="#9cdcfe"/><rect x="1995.88" y="247.35" width="0.74" height="1.6" fill="#d4d4d4"/><rect x="1997.36" y="247.35" width="0.74" height="1.6" fill="#b5cea8"/><rect x="1998.10" y="247.35" width="0.74" height="1.6" fill="#ffd700"/><rect x="1978.12" y="248.82" width="0.74" height="1.6" fill="#9cdcfe"/><rect x="1979.60" y="248.82" width="0.74" height="1.6" fill="#d4d4d4"/><rect x="1981.08" y="248.82" width="2.22" height="1.6" fill="#dcdcaa"/><rect x="1983.30" y="248.82" width="0.74" height="1.6" fill="#ffd700"/><rect x="1984.04" y="248.82" width="2.22" height="1.6" fill="#dcdcaa"/><rect x="1986.26" y="248.82" width="0.74" height="1.6" fill="#da70d6"/><rect x="1987.00" y="248.82" width="0.74" height="1.6" fill="#9cdcfe"/><rect x="1987.74" y="248.82" width="0.74" height="1.6" fill="#d4d4d4"/><rect x="1989.22" y="248.82" width="0.74" height="1.6" fill="#b5cea8"/><rect x="1989.96" y="248.82" width="0.74" height="1.6" fill="#da70d6"/><rect x="1990.70" y="248.82" width="0.74" height="1.6" fill="#d4d4d4"/><rect x="1992.18" y="248.82" width="2.96" height="1.6" fill="#9cdcfe"/><rect x="1995.88" y="248.82" width="0.74" height="1.6" fill="#d4d4d4"/><rect x="1997.36" y="248.82" width="0.74" height="1.6" fill="#b5cea8"/><rect x="1998.10" y="248.82" width="0.74" height="1.6" fill="#ffd700"/><rect x="1978.12" y="251.78" width="0.74" height="1.6" fill="#6a9955"/><rect x="1979.60" y="251.78" width="5.18" height="1.6" fill="#6a9955"/><rect x="1985.52" y="251.78" width="2.22" height="1.6" fill="#6a9955"/><rect x="1988.48" y="251.78" width="3.70" height="1.6" fill="#6a9955"/><rect x="1992.92" y="251.78" width="3.70" height="1.6" fill="#6a9955"/><rect x="1997.36" y="251.78" width="5.18" height="1.6" fill="#6a9955"/><rect x="2003.28" y="251.78" width="1.48" height="1.6" fill="#6a9955"/><rect x="2005.50" y="251.78" width="2.22" height="1.6" fill="#6a9955"/><rect x="2008.46" y="251.78" width="5.92" height="1.6" fill="#6a9955"/><rect x="2015.12" y="251.78" width="2.96" height="1.6" fill="#6a9955"/><rect x="1978.12" y="253.26" width="9.62" height="1.6" fill="#9cdcfe"/><rect x="1987.74" y="253.26" width="0.74" height="1.6" fill="#d4d4d4"/><rect x="1988.48" y="253.26" width="4.44" height="1.6" fill="#dcdcaa"/><rect x="1992.92" y="253.26" width="0.74" height="1.6" fill="#ffd700"/><rect x="1993.66" y="253.26" width="11.10" height="1.6" fill="#9cdcfe"/><rect x="2004.76" y="253.26" width="0.74" height="1.6" fill="#da70d6"/><rect x="2005.50" y="253.26" width="0.74" height="1.6" fill="#9cdcfe"/><rect x="2006.24" y="253.26" width="0.74" height="1.6" fill="#d4d4d4"/><rect x="2007.72" y="253.26" width="0.74" height="1.6" fill="#9cdcfe"/><rect x="2008.46" y="253.26" width="0.74" height="1.6" fill="#da70d6"/><rect x="2009.20" y="253.26" width="0.74" height="1.6" fill="#ffd700"/><rect x="1975.16" y="256.21" width="4.44" height="1.6" fill="#c586c0"/><rect x="1980.34" y="256.21" width="1.48" height="1.6" fill="#4ec9b0"/><rect x="1981.82" y="256.21" width="0.74" height="1.6" fill="#d4d4d4"/><rect x="1982.56" y="256.21" width="3.70" height="1.6" fill="#dcdcaa"/><rect x="1986.26" y="256.21" width="0.74" height="1.6" fill="#ffd700"/><rect x="1987.00" y="256.21" width="9.62" height="1.6" fill="#9cdcfe"/><rect x="1996.62" y="256.21" width="0.74" height="1.6" fill="#ffd700"/><rect x="1972.20" y="260.64" width="2.22" height="1.6" fill="#569cd6"/><rect x="1975.16" y="260.64" width="13.32" height="1.6" fill="#dcdcaa"/><rect x="1988.48" y="260.64" width="0.74" height="1.6" fill="#ffd700"/><rect x="1989.22" y="260.64" width="11.10" height="1.6" fill="#9cdcfe"/><rect x="2000.32" y="260.64" width="0.74" height="1.6" fill="#d4d4d4"/><rect x="2001.80" y="260.64" width="6.66" height="1.6" fill="#9cdcfe"/><rect x="2008.46" y="260.64" width="0.74" height="1.6" fill="#d4d4d4"/><rect x="2009.94" y="260.64" width="6.66" height="1.6" fill="#9cdcfe"/><rect x="2016.60" y="260.64" width="0.74" height="1.6" fill="#d4d4d4"/><rect x="2017.34" y="260.64" width="3.70" height="1.6" fill="#569cd6"/><rect x="2021.04" y="260.64" width="0.74" height="1.6" fill="#ffd700"/><rect x="2021.78" y="260.64" width="0.74" height="1.6" fill="#d4d4d4"/><rect x="1975.16" y="262.12" width="5.18" height="1.6" fill="#ce9178"/><rect x="1981.08" y="262.12" width="6.66" height="1.6" fill="#ce9178"/><rect x="1988.48" y="262.12" width="4.44" height="1.6" fill="#ce9178"/><rect x="1993.66" y="262.12" width="2.22" height="1.6" fill="#ce9178"/><rect x="1996.62" y="262.12" width="0.74" height="1.6" fill="#ce9178"/><rect x="1998.10" y="262.12" width="4.44" height="1.6" fill="#ce9178"/><rect x="2003.28" y="262.12" width="5.18" height="1.6" fill="#ce9178"/><rect x="1975.16" y="263.59" width="1.48" height="1.6" fill="#c586c0"/><rect x="1977.38" y="263.59" width="6.66" height="1.6" fill="#9cdcfe"/><rect x="1984.78" y="263.59" width="0.74" height="1.6" fill="#d4d4d4"/><rect x="1986.26" y="263.59" width="0.74" height="1.6" fill="#b5cea8"/><rect x="1987.74" y="263.59" width="1.48" height="1.6" fill="#569cd6"/><rect x="1989.96" y="263.59" width="6.66" height="1.6" fill="#9cdcfe"/><rect x="1997.36" y="263.59" width="1.48" height="1.6" fill="#d4d4d4"/><rect x="1999.58" y="263.59" width="11.10" height="1.6" fill="#9cdcfe"/><rect x="2010.68" y="263.59" width="0.74" height="1.6" fill="#d4d4d4"/><rect x="2011.42" y="263.59" width="3.70" height="1.6" fill="#9cdcfe"/><rect x="2015.12" y="263.59" width="0.74" height="1.6" fill="#ffd700"/><rect x="2015.86" y="263.59" width="0.74" height="1.6" fill="#b5cea8"/><rect x="2016.60" y="263.59" width="0.74" height="1.6" fill="#ffd700"/><rect x="2017.34" y="263.59" width="0.74" height="1.6" fill="#d4d4d4"/><rect x="1978.12" y="265.07" width="3.70" height="1.6" fill="#dcdcaa"/><rect x="1981.82" y="265.07" width="0.74" height="1.6" fill="#ffd700"/><rect x="1982.56" y="265.07" width="0.74" height="1.6" fill="#569cd6"/><rect x="1983.30" y="265.07" width="5.18" height="1.6" fill="#ce9178"/><rect x="1989.22" y="265.07" width="2.22" height="1.6" fill="#ce9178"/><rect x="1992.18" y="265.07" width="3.70" height="1.6" fill="#ce9178"/><rect x="1996.62" y="265.07" width="0.74" height="1.6" fill="#da70d6"/><rect x="1997.36" y="265.07" width="6.66" height="1.6" fill="#9cdcfe"/><rect x="2004.02" y="265.07" width="0.74" height="1.6" fill="#da70d6"/><rect x="2005.50" y="265.07" width="1.48" height="1.6" fill="#ce9178"/><rect x="2007.72" y="265.07" width="2.22" height="1.6" fill="#ce9178"/><rect x="2010.68" y="265.07" width="1.48" height="1.6" fill="#ce9178"/><rect x="2012.90" y="265.07" width="5.18" height="1.6" fill="#ce9178"/><rect x="2018.82" y="265.07" width="0.74" height="1.6" fill="#ce9178"/><rect x="1982.56" y="266.55" width="0.74" height="1.6" fill="#569cd6"/><rect x="1983.30" y="266.55" width="4.44" height="1.6" fill="#ce9178"/><rect x="1988.48" y="266.55" width="4.44" height="1.6" fill="#ce9178"/><rect x="1993.66" y="266.55" width="0.74" height="1.6" fill="#ce9178"/><rect x="1995.14" y="266.55" width="1.48" height="1.6" fill="#ce9178"/><rect x="1997.36" y="266.55" width="0.74" height="1.6" fill="#da70d6"/><rect x="1998.10" y="266.55" width="11.10" height="1.6" fill="#9cdcfe"/><rect x="2009.20" y="266.55" width="0.74" height="1.6" fill="#d4d4d4"/><rect x="2009.94" y="266.55" width="3.70" height="1.6" fill="#9cdcfe"/><rect x="2013.64" y="266.55" width="0.74" height="1.6" fill="#179fff"/><rect x="2014.38" y="266.55" width="0.74" height="1.6" fill="#b5cea8"/><rect x="2015.12" y="266.55" width="0.74" height="1.6" fill="#179fff"/><rect x="2015.86" y="266.55" width="0.74" height="1.6" fill="#d4d4d4"/><rect x="2016.60" y="266.55" width="0.74" height="1.6" fill="#b5cea8"/><rect x="2017.34" y="266.55" width="0.74" height="1.6" fill="#da70d6"/><rect x="2018.08" y="266.55" width="0.74" height="1.6" fill="#ce9178"/><rect x="2018.82" y="266.55" width="0.74" height="1.6" fill="#ffd700"/><rect x="1978.12" y="268.02" width="2.22" height="1.6" fill="#4ec9b0"/><rect x="1980.34" y="268.02" width="0.74" height="1.6" fill="#d4d4d4"/><rect x="1981.08" y="268.02" width="2.96" height="1.6" fill="#dcdcaa"/><rect x="1984.04" y="268.02" width="0.74" height="1.6" fill="#ffd700"/><rect x="1984.78" y="268.02" width="0.74" height="1.6" fill="#b5cea8"/><rect x="1985.52" y="268.02" width="0.74" height="1.6" fill="#ffd700"/><rect x="1975.16" y="270.98" width="0.74" height="1.6" fill="#6a9955"/><rect x="1976.64" y="270.98" width="5.18" height="1.6" fill="#6a9955"/><rect x="1982.56" y="270.98" width="2.22" height="1.6" fill="#6a9955"/><rect x="1985.52" y="270.98" width="6.66" height="1.6" fill="#6a9955"/><rect x="1992.92" y="270.98" width="2.22" height="1.6" fill="#6a9955"/><rect x="1975.16" y="272.46" width="5.92" height="1.6" fill="#9cdcfe"/><rect x="1981.82" y="272.46" width="0.74" height="1.6" fill="#d4d4d4"/><rect x="1983.30" y="272.46" width="11.10" height="1.6" fill="#9cdcfe"/><rect x="1994.40" y="272.46" width="0.74" height="1.6" fill="#ffd700"/><rect x="1995.14" y="272.46" width="6.66" height="1.6" fill="#9cdcfe"/><rect x="2001.80" y="272.46" width="0.74" height="1.6" fill="#d4d4d4"/><rect x="2003.28" y="272.46" width="0.74" height="1.6" fill="#d4d4d4"/><rect x="2004.02" y="272.46" width="0.74" height="1.6" fill="#ffd700"/><rect x="1975.16" y="275.41" width="0.74" height="1.6" fill="#6a9955"/><rect x="1976.64" y="275.41" width="2.22" height="1.6" fill="#6a9955"/><rect x="1979.60" y="275.41" width="2.22" height="1.6" fill="#6a9955"/><rect x="1982.56" y="275.41" width="5.18" height="1.6" fill="#6a9955"/><rect x="1988.48" y="275.41" width="5.92" height="1.6" fill="#6a9955"/><rect x="1995.14" y="275.41" width="5.92" height="1.6" fill="#6a9955"/><rect x="1975.16" y="276.89" width="14.80" height="1.6" fill="#dcdcaa"/><rect x="1989.96" y="276.89" width="0.74" height="1.6" fill="#ffd700"/><rect x="1990.70" y="276.89" width="11.10" height="1.6" fill="#9cdcfe"/><rect x="2001.80" y="276.89" width="0.74" height="1.6" fill="#d4d4d4"/><rect x="2003.28" y="276.89" width="5.92" height="1.6" fill="#9cdcfe"/><rect x="2009.20" y="276.89" width="0.74" height="1.6" fill="#d4d4d4"/><rect x="2010.68" y="276.89" width="3.70" height="1.6" fill="#ce9178"/><rect x="2014.38" y="276.89" width="0.74" height="1.6" fill="#d4d4d4"/><rect x="2015.86" y="276.89" width="6.66" height="1.6" fill="#9cdcfe"/><rect x="2022.52" y="276.89" width="0.74" height="1.6" fill="#d4d4d4"/><rect x="2024.00" y="276.89" width="6.66" height="1.6" fill="#9cdcfe"/><rect x="2030.66" y="276.89" width="0.74" height="1.6" fill="#ffd700"/><rect x="1972.20" y="281.32" width="2.22" height="1.6" fill="#569cd6"/><rect x="1975.16" y="281.32" width="2.96" height="1.6" fill="#dcdcaa"/><rect x="1978.12" y="281.32" width="0.74" height="1.6" fill="#ffd700"/><rect x="1978.86" y="281.32" width="0.74" height="1.6" fill="#ffd700"/><rect x="1979.60" y="281.32" width="0.74" height="1.6" fill="#d4d4d4"/><rect x="1975.16" y="282.80" width="0.74" height="1.6" fill="#6a9955"/><rect x="1976.64" y="282.80" width="3.70" height="1.6" fill="#6a9955"/><rect x="1981.08" y="282.80" width="5.18" height="1.6" fill="#6a9955"/><rect x="1987.00" y="282.80" width="2.96" height="1.6" fill="#6a9955"/><rect x="1990.70" y="282.80" width="6.66" height="1.6" fill="#6a9955"/><rect x="1975.16" y="284.27" width="1.48" height="1.6" fill="#c586c0"/><rect x="1977.38" y="284.27" width="2.22" height="1.6" fill="#dcdcaa"/><rect x="1979.60" y="284.27" width="0.74" height="1.6" fill="#ffd700"/><rect x="1980.34" y="284.27" width="2.22" height="1.6" fill="#4ec9b0"/><rect x="1982.56" y="284.27" width="0.74" height="1.6" fill="#d4d4d4"/><rect x="1983.30" y="284.27" width="2.96" height="1.6" fill="#9cdcfe"/><rect x="1986.26" y="284.27" width="0.74" height="1.6" fill="#ffd700"/><rect x="1987.74" y="284.27" width="0.74" height="1.6" fill="#d4d4d4"/><rect x="1989.22" y="284.27" width="0.74" height="1.6" fill="#b5cea8"/><rect x="1989.96" y="284.27" width="0.74" height="1.6" fill="#d4d4d4"/><rect x="1978.12" y="285.75" width="3.70" height="1.6" fill="#dcdcaa"/><rect x="1981.82" y="285.75" width="0.74" height="1.6" fill="#ffd700"/><rect x="1982.56" y="285.75" width="5.18" height="1.6" fill="#ce9178"/><rect x="1988.48" y="285.75" width="4.44" height="1.6" fill="#ce9178"/><rect x="1993.66" y="285.75" width="12.58" height="1.6" fill="#ce9178"/><rect x="2006.98" y="285.75" width="8.14" height="1.6" fill="#ce9178"/><rect x="2015.86" y="285.75" width="7.40" height="1.6" fill="#ce9178"/><rect x="2024.00" y="285.75" width="0.74" height="1.6" fill="#ce9178"/><rect x="2025.48" y="285.75" width="7.40" height="1.6" fill="#ce9178"/><rect x="2032.88" y="285.75" width="0.74" height="1.6" fill="#ffd700"/><rect x="1978.12" y="287.23" width="2.22" height="1.6" fill="#4ec9b0"/><rect x="1980.34" y="287.23" width="0.74" height="1.6" fill="#d4d4d4"/><rect x="1981.08" y="287.23" width="2.96" height="1.6" fill="#dcdcaa"/><rect x="1984.04" y="287.23" width="0.74" height="1.6" fill="#ffd700"/><rect x="1984.78" y="287.23" width="0.74" height="1.6" fill="#b5cea8"/><rect x="1985.52" y="287.23" width="0.74" height="1.6" fill="#ffd700"/><rect x="1975.16" y="290.18" width="6.66" height="1.6" fill="#9cdcfe"/><rect x="1982.56" y="290.18" width="0.74" height="1.6" fill="#d4d4d4"/><rect x="1984.04" y="290.18" width="2.22" height="1.6" fill="#4ec9b0"/><rect x="1986.26" y="290.18" width="0.74" height="1.6" fill="#d4d4d4"/><rect x="1987.00" y="290.18" width="2.96" height="1.6" fill="#9cdcfe"/><rect x="1989.96" y="290.18" width="0.74" height="1.6" fill="#ffd700"/><rect x="1990.70" y="290.18" width="0.74" height="1.6" fill="#b5cea8"/><rect x="1991.44" y="290.18" width="0.74" height="1.6" fill="#ffd700"/><rect x="1975.16" y="294.61" width="0.74" height="1.6" fill="#6a9955"/><rect x="1976.64" y="294.61" width="2.96" height="1.6" fill="#6a9955"/><rect x="1980.34" y="294.61" width="6.66" height="1.6" fill="#6a9955"/><rect x="1987.74" y="294.61" width="2.96" height="1.6" fill="#6a9955"/><rect x="1975.16" y="296.09" width="11.10" height="1.6" fill="#9cdcfe"/><rect x="1987.00" y="296.09" width="0.74" height="1.6" fill="#d4d4d4"/><rect x="1988.48" y="296.09" width="14.06" height="1.6" fill="#dcdcaa"/><rect x="2002.54" y="296.09" width="0.74" height="1.6" fill="#ffd700"/><rect x="2003.28" y="296.09" width="6.66" height="1.6" fill="#9cdcfe"/><rect x="2009.94" y="296.09" width="0.74" height="1.6" fill="#ffd700"/><rect x="1975.16" y="299.04" width="0.74" height="1.6" fill="#6a9955"/><rect x="1976.64" y="299.04" width="3.70" height="1.6" fill="#6a9955"/><rect x="1981.08" y="299.04" width="8.14" height="1.6" fill="#6a9955"/><rect x="1975.16" y="300.52" width="3.70" height="1.6" fill="#dcdcaa"/><rect x="1978.86" y="300.52" width="0.74" height="1.6" fill="#ffd700"/><rect x="1979.60" y="300.52" width="0.74" height="1.6" fill="#569cd6"/><rect x="1980.34" y="300.52" width="5.92" height="1.6" fill="#ce9178"/><rect x="1987.00" y="300.52" width="6.66" height="1.6" fill="#ce9178"/><rect x="1994.40" y="300.52" width="2.96" height="1.6" fill="#ce9178"/><rect x="1998.10" y="300.52" width="3.70" height="1.6" fill="#ce9178"/><rect x="2002.54" y="300.52" width="0.74" height="1.6" fill="#da70d6"/><rect x="2003.28" y="300.52" width="6.66" height="1.6" fill="#9cdcfe"/><rect x="2009.94" y="300.52" width="0.74" height="1.6" fill="#da70d6"/><rect x="2010.68" y="300.52" width="0.74" height="1.6" fill="#ce9178"/><rect x="2011.42" y="300.52" width="0.74" height="1.6" fill="#ffd700"/><rect x="1975.16" y="302.00" width="3.70" height="1.6" fill="#dcdcaa"/><rect x="1978.86" y="302.00" width="0.74" height="1.6" fill="#ffd700"/><rect x="1979.60" y="302.00" width="0.74" height="1.6" fill="#569cd6"/><rect x="1980.34" y="302.00" width="3.70" height="1.6" fill="#ce9178"/><rect x="1984.78" y="302.00" width="4.44" height="1.6" fill="#ce9178"/><rect x="1989.96" y="302.00" width="0.74" height="1.6" fill="#da70d6"/><rect x="1990.70" y="302.00" width="11.10" height="1.6" fill="#9cdcfe"/><rect x="2001.80" y="302.00" width="0.74" height="1.6" fill="#d4d4d4"/><rect x="2002.54" y="302.00" width="3.70" height="1.6" fill="#9cdcfe"/><rect x="2006.24" y="302.00" width="0.74" height="1.6" fill="#da70d6"/><rect x="2006.98" y="302.00" width="0.74" height="1.6" fill="#ce9178"/><rect x="2007.72" y="302.00" width="0.74" height="1.6" fill="#ffd700"/><rect x="1975.16" y="303.47" width="2.96" height="1.6" fill="#9cdcfe"/><rect x="1978.12" y="303.47" width="0.74" height="1.6" fill="#d4d4d4"/><rect x="1979.60" y="303.47" width="2.96" height="1.6" fill="#9cdcfe"/><rect x="1983.30" y="303.47" width="0.74" height="1.6" fill="#d4d4d4"/><rect x="1984.78" y="303.47" width="11.10" height="1.6" fill="#9cdcfe"/><rect x="1995.88" y="303.47" width="0.74" height="1.6" fill="#d4d4d4"/><rect x="1996.62" y="303.47" width="3.70" height="1.6" fill="#9cdcfe"/><rect x="1975.16" y="306.43" width="1.48" height="1.6" fill="#c586c0"/><rect x="1977.38" y="306.43" width="2.22" height="1.6" fill="#dcdcaa"/><rect x="1979.60" y="306.43" width="0.74" height="1.6" fill="#ffd700"/><rect x="1980.34" y="306.43" width="2.22" height="1.6" fill="#4ec9b0"/><rect x="1982.56" y="306.43" width="0.74" height="1.6" fill="#d4d4d4"/><rect x="1983.30" y="306.43" width="2.96" height="1.6" fill="#9cdcfe"/><rect x="1986.26" y="306.43" width="0.74" height="1.6" fill="#ffd700"/><rect x="1987.74" y="306.43" width="0.74" height="1.6" fill="#d4d4d4"/><rect x="1989.22" y="306.43" width="0.74" height="1.6" fill="#b5cea8"/><rect x="1989.96" y="306.43" width="0.74" height="1.6" fill="#d4d4d4"/><rect x="1978.12" y="307.90" width="0.74" height="1.6" fill="#6a9955"/><rect x="1979.60" y="307.90" width="2.22" height="1.6" fill="#6a9955"/><rect x="1982.56" y="307.90" width="3.70" height="1.6" fill="#6a9955"/><rect x="1987.00" y="307.90" width="5.92" height="1.6" fill="#6a9955"/><rect x="1993.66" y="307.90" width="2.96" height="1.6" fill="#6a9955"/><rect x="1997.36" y="307.90" width="2.96" height="1.6" fill="#6a9955"/><rect x="1978.12" y="309.38" width="6.66" height="1.6" fill="#9cdcfe"/><rect x="1985.52" y="309.38" width="0.74" height="1.6" fill="#d4d4d4"/><rect x="1987.00" y="309.38" width="2.22" height="1.6" fill="#4ec9b0"/><rect x="1989.22" y="309.38" width="0.74" height="1.6" fill="#d4d4d4"/><rect x="1989.96" y="309.38" width="2.96" height="1.6" fill="#9cdcfe"/><rect x="1992.92" y="309.38" width="0.74" height="1.6" fill="#ffd700"/><rect x="1993.66" y="309.38" width="0.74" height="1.6" fill="#b5cea8"/><rect x="1994.40" y="309.38" width="0.74" height="1.6" fill="#ffd700"/><rect x="1995.14" y="309.38" width="0.74" height="1.6" fill="#d4d4d4"/><rect x="1995.88" y="309.38" width="3.70" height="1.6" fill="#dcdcaa"/><rect x="1999.58" y="309.38" width="0.74" height="1.6" fill="#ffd700"/><rect x="2000.32" y="309.38" width="0.74" height="1.6" fill="#ffd700"/><rect x="1978.12" y="310.86" width="1.48" height="1.6" fill="#c586c0"/><rect x="1980.34" y="310.86" width="6.66" height="1.6" fill="#9cdcfe"/><rect x="1987.74" y="310.86" width="1.48" height="1.6" fill="#d4d4d4"/><rect x="1989.96" y="310.86" width="7.40" height="1.6" fill="#ce9178"/><rect x="1997.36" y="310.86" width="0.74" height="1.6" fill="#d4d4d4"/><rect x="1981.08" y="312.34" width="5.92" height="1.6" fill="#9cdcfe"/><rect x="1987.74" y="312.34" width="0.74" height="1.6" fill="#d4d4d4"/><rect x="1989.22" y="312.34" width="13.32" height="1.6" fill="#dcdcaa"/><rect x="2002.54" y="312.34" width="0.74" height="1.6" fill="#ffd700"/><rect x="2003.28" y="312.34" width="11.10" height="1.6" fill="#9cdcfe"/><rect x="2014.38" y="312.34" width="0.74" height="1.6" fill="#ffd700"/><rect x="1978.12" y="315.29" width="0.74" height="1.6" fill="#6a9955"/><rect x="1979.60" y="315.29" width="2.96" height="1.6" fill="#6a9955"/><rect x="1983.30" y="315.29" width="5.92" height="1.6" fill="#6a9955"/><rect x="1989.96" y="315.29" width="3.70" height="1.6" fill="#6a9955"/><rect x="1978.12" y="316.77" width="14.80" height="1.6" fill="#dcdcaa"/><rect x="1992.92" y="316.77" width="0.74" height="1.6" fill="#ffd700"/><rect x="1993.66" y="316.77" width="11.10" height="1.6" fill="#9cdcfe"/><rect x="2004.76" y="316.77" width="0.74" height="1.6" fill="#d4d4d4"/><rect x="2006.24" y="316.77" width="5.92" height="1.6" fill="#9cdcfe"/><rect x="2012.16" y="316.77" width="0.74" height="1.6" fill="#d4d4d4"/><rect x="2013.64" y="316.77" width="7.40" height="1.6" fill="#ce9178"/><rect x="2021.04" y="316.77" width="0.74" height="1.6" fill="#ffd700"/><rect x="1975.16" y="318.24" width="2.96" height="1.6" fill="#c586c0"/><rect x="1978.12" y="318.24" width="0.74" height="1.6" fill="#d4d4d4"/><rect x="1978.12" y="319.72" width="0.74" height="1.6" fill="#6a9955"/><rect x="1979.60" y="319.72" width="2.22" height="1.6" fill="#6a9955"/><rect x="1982.56" y="319.72" width="3.70" height="1.6" fill="#6a9955"/><rect x="1987.00" y="319.72" width="5.92" height="1.6" fill="#6a9955"/><rect x="1993.66" y="319.72" width="1.48" height="1.6" fill="#6a9955"/><rect x="1995.88" y="319.72" width="2.22" height="1.6" fill="#6a9955"/><rect x="1978.12" y="321.20" width="2.22" height="1.6" fill="#c586c0"/><rect x="1980.34" y="321.20" width="0.74" height="1.6" fill="#d4d4d4"/><rect x="1981.08" y="322.67" width="6.66" height="1.6" fill="#9cdcfe"/><rect x="1988.48" y="322.67" width="0.74" height="1.6" fill="#d4d4d4"/><rect x="1989.96" y="322.67" width="2.22" height="1.6" fill="#4ec9b0"/><rect x="1992.18" y="322.67" width="0.74" height="1.6" fill="#ffd700"/><rect x="1992.92" y="322.67" width="6.66" height="1.6" fill="#9cdcfe"/><rect x="1999.58" y="322.67" width="0.74" height="1.6" fill="#ffd700"/><rect x="1978.12" y="324.15" width="4.44" height="1.6" fill="#c586c0"/><rect x="1983.30" y="324.15" width="7.40" height="1.6" fill="#4ec9b0"/><rect x="1990.70" y="324.15" width="0.74" height="1.6" fill="#d4d4d4"/><rect x="1981.08" y="325.63" width="3.70" height="1.6" fill="#dcdcaa"/><rect x="1984.78" y="325.63" width="0.74" height="1.6" fill="#ffd700"/><rect x="1985.52" y="325.63" width="0.74" height="1.6" fill="#569cd6"/><rect x="1986.26" y="325.63" width="5.18" height="1.6" fill="#ce9178"/><rect x="1992.18" y="325.63" width="5.18" height="1.6" fill="#ce9178"/><rect x="1998.10" y="325.63" width="2.22" height="1.6" fill="#ce9178"/><rect x="2001.06" y="325.63" width="3.70" height="1.6" fill="#ce9178"/><rect x="2005.50" y="325.63" width="0.74" height="1.6" fill="#da70d6"/><rect x="2006.24" y="325.63" width="6.66" height="1.6" fill="#9cdcfe"/><rect x="2012.90" y="325.63" width="0.74" height="1.6" fill="#da70d6"/><rect x="2013.64" y="325.63" width="0.74" height="1.6" fill="#ce9178"/><rect x="2014.38" y="325.63" width="0.74" height="1.6" fill="#ffd700"/><rect x="1981.08" y="327.11" width="2.22" height="1.6" fill="#4ec9b0"/><rect x="1983.30" y="327.11" width="0.74" height="1.6" fill="#d4d4d4"/><rect x="1984.04" y="327.11" width="2.96" height="1.6" fill="#dcdcaa"/><rect x="1987.00" y="327.11" width="0.74" height="1.6" fill="#ffd700"/><rect x="1987.74" y="327.11" width="0.74" height="1.6" fill="#b5cea8"/><rect x="1988.48" y="327.11" width="0.74" height="1.6" fill="#ffd700"/><rect x="1978.12" y="330.06" width="2.96" height="1.6" fill="#c586c0"/><rect x="1981.08" y="330.06" width="0.74" height="1.6" fill="#d4d4d4"/><rect x="1981.08" y="331.54" width="0.74" height="1.6" fill="#6a9955"/><rect x="1982.56" y="331.54" width="5.18" height="1.6" fill="#6a9955"/><rect x="1988.48" y="331.54" width="4.44" height="1.6" fill="#6a9955"/><rect x="1993.66" y="331.54" width="2.22" height="1.6" fill="#6a9955"/><rect x="1981.08" y="333.01" width="6.66" height="1.6" fill="#9cdcfe"/><rect x="1988.48" y="333.01" width="0.74" height="1.6" fill="#d4d4d4"/><rect x="1989.96" y="333.01" width="2.96" height="1.6" fill="#9cdcfe"/><rect x="1993.66" y="333.01" width="1.48" height="1.6" fill="#d4d4d4"/><rect x="1995.88" y="333.01" width="0.74" height="1.6" fill="#b5cea8"/><rect x="1984.04" y="334.49" width="6.66" height="1.6" fill="#9cdcfe"/><rect x="1991.44" y="334.49" width="0.74" height="1.6" fill="#d4d4d4"/><rect x="1992.92" y="334.49" width="2.96" height="1.6" fill="#569cd6"/><rect x="1981.08" y="335.97" width="3.70" height="1.6" fill="#dcdcaa"/><rect x="1984.78" y="335.97" width="0.74" height="1.6" fill="#ffd700"/><rect x="1985.52" y="335.97" width="0.74" height="1.6" fill="#569cd6"/><rect x="1986.26" y="335.97" width="2.22" height="1.6" fill="#ce9178"/><rect x="1989.22" y="335.97" width="2.22" height="1.6" fill="#ce9178"/><rect x="1992.18" y="335.97" width="7.40" height="1.6" fill="#ce9178"/><rect x="2000.32" y="335.97" width="3.70" height="1.6" fill="#ce9178"/><rect x="2004.76" y="335.97" width="4.44" height="1.6" fill="#ce9178"/><rect x="2009.94" y="335.97" width="2.96" height="1.6" fill="#ce9178"/><rect x="2013.64" y="335.97" width="0.74" height="1.6" fill="#da70d6"/><rect x="2014.38" y="335.97" width="6.66" height="1.6" fill="#9cdcfe"/><rect x="2021.04" y="335.97" width="0.74" height="1.6" fill="#da70d6"/><rect x="2021.78" y="335.97" width="0.74" height="1.6" fill="#ce9178"/><rect x="2022.52" y="335.97" width="0.74" height="1.6" fill="#ffd700"/><rect x="1978.12" y="338.92" width="3.70" height="1.6" fill="#dcdcaa"/><rect x="1981.82" y="338.92" width="0.74" height="1.6" fill="#ffd700"/><rect x="1982.56" y="338.92" width="0.74" height="1.6" fill="#569cd6"/><rect x="1983.30" y="338.92" width="6.66" height="1.6" fill="#ce9178"/><rect x="1990.70" y="338.92" width="6.66" height="1.6" fill="#ce9178"/><rect x="1998.10" y="338.92" width="2.22" height="1.6" fill="#ce9178"/><rect x="2001.06" y="338.92" width="2.22" height="1.6" fill="#ce9178"/><rect x="2004.02" y="338.92" width="0.74" height="1.6" fill="#da70d6"/><rect x="2004.76" y="338.92" width="6.66" height="1.6" fill="#9cdcfe"/><rect x="2011.42" y="338.92" width="0.74" height="1.6" fill="#da70d6"/><rect x="2012.16" y="338.92" width="0.74" height="1.6" fill="#ce9178"/><rect x="2012.90" y="338.92" width="0.74" height="1.6" fill="#ffd700"/><rect x="1978.12" y="341.88" width="0.74" height="1.6" fill="#6a9955"/><rect x="1979.60" y="341.88" width="2.96" height="1.6" fill="#6a9955"/><rect x="1983.30" y="341.88" width="2.22" height="1.6" fill="#6a9955"/><rect x="1986.26" y="341.88" width="2.22" height="1.6" fill="#6a9955"/><rect x="1978.12" y="343.35" width="13.32" height="1.6" fill="#dcdcaa"/><rect x="1991.44" y="343.35" width="0.74" height="1.6" fill="#ffd700"/><rect x="1992.18" y="343.35" width="11.10" height="1.6" fill="#9cdcfe"/><rect x="2003.28" y="343.35" width="0.74" height="1.6" fill="#d4d4d4"/><rect x="2004.76" y="343.35" width="6.66" height="1.6" fill="#9cdcfe"/><rect x="2011.42" y="343.35" width="0.74" height="1.6" fill="#d4d4d4"/><rect x="2012.90" y="343.35" width="6.66" height="1.6" fill="#9cdcfe"/><rect x="2019.56" y="343.35" width="0.74" height="1.6" fill="#ffd700"/><rect x="1972.20" y="347.78" width="1.48" height="1.6" fill="#c586c0"/><rect x="1974.42" y="347.78" width="5.92" height="1.6" fill="#9cdcfe"/><rect x="1981.08" y="347.78" width="1.48" height="1.6" fill="#d4d4d4"/><rect x="1983.30" y="347.78" width="7.40" height="1.6" fill="#ce9178"/><rect x="1990.70" y="347.78" width="0.74" height="1.6" fill="#d4d4d4"/><rect x="1975.16" y="349.26" width="2.96" height="1.6" fill="#dcdcaa"/><rect x="1978.12" y="349.26" width="0.74" height="1.6" fill="#ffd700"/><rect x="1978.86" y="349.26" width="0.74" height="1.6" fill="#ffd700"/></svg>
<div class="a" style="left:2054.4px;top:83px;width:18.60px;height:1390.00px;background:#1f1f1f;"></div>
<div class="a" style="left:2054px;top:83px;width:1.00px;height:1390.00px;background:#171717;"></div>
<div class="a" style="left:2054px;top:83px;width:19px;height:4px;background:linear-gradient(#0d0d0d,rgba(0,0,0,0))"></div>
<div class="a" style="left:2055px;top:441px;width:18.00px;height:3.00px;background:#8f8f8f;"></div>
<div class="a" style="left:2073px;top:6px;width:1.00px;height:1468.00px;background:#2b2b2b;"></div>
<div class="a" style="left:2074px;top:6px;width:486.00px;height:1467.00px;background:#181818;"></div>
<div class="a" style="left:2074px;top:6px;width:486.00px;height:1.00px;background:#222222;"></div>
<div class="a" style="left:2074px;top:6px;width:179.50px;height:46.50px;background:#1f1f1f;"></div>
<div class="a" style="left:2253.5px;top:6px;width:1.00px;height:46.50px;background:#262626;"></div>
<div class="a" style="left:2074px;top:6.2px;width:179.50px;height:2.00px;background:#3b7bd2;"></div>
<div class="a" style="left:2254.5px;top:52px;width:305.50px;height:1.00px;background:#2b2b2b;"></div>
<div id="chattab" class="a t " style="left:2087.00px;top:17.81px;font-family:'Liberation Sans', sans-serif;font-size:17.3px;line-height:24.22px;color:#ffffff;letter-spacing:-0.500px;">Plot FITS Luminance</div>
<svg width="16" height="16" viewBox="0 0 16 16" style="left:2437px;top:22px"><path d="M8 1V15M1 8H15" stroke="#d0d0d0" stroke-width="1.5"/></svg>
<svg width="20" height="20" viewBox="0 0 20 20" style="left:2466.5px;top:19.8px"><g fill="none" stroke="#d0d0d0" stroke-width="1.5"><path d="M3.2 6.5A7.6 7.6 0 1 1 2.4 10"/><path d="M2.2 2.5V6.8H6.5"/><path d="M10 5.5V10L13 12"/></g></svg>
<svg width="17" height="5" viewBox="0 0 17 5" style="left:2500.5px;top:27.5px"><g fill="#d0d0d0"><circle cx="2" cy="2.5" r="1.7"/><circle cx="8.5" cy="2.5" r="1.7"/><circle cx="15" cy="2.5" r="1.7"/></g></svg>
<svg width="14" height="14" viewBox="0 0 14 14" style="left:2533px;top:23px"><path d="M1 1L13 13M13 1L1 13" stroke="#d0d0d0" stroke-width="1.4"/></svg>
<div class="a" style="left:2074px;top:117px;width:11.00px;height:1.00px;background:#505050;"></div>
<div class="a" style="left:2074px;top:136px;width:11.00px;height:1.00px;background:#505050;"></div>
<div class="a" style="left:2074px;top:148px;width:11.00px;height:1.00px;background:#505050;"></div>
<div class="a" style="left:2074px;top:160px;width:11.00px;height:1.00px;background:#505050;"></div>
<div class="a" style="left:2074px;top:171px;width:11.00px;height:1.00px;background:#505050;"></div>
<div class="a" style="left:2074px;top:183px;width:11.00px;height:1.00px;background:#505050;"></div>
<div class="a" style="left:2074px;top:195px;width:11.00px;height:1.00px;background:#505050;"></div>
<div class="a" style="left:2074px;top:207px;width:11.00px;height:1.00px;background:#505050;"></div>
<div class="a" style="left:2074px;top:219px;width:11.00px;height:1.00px;background:#505050;"></div>
<div class="a" style="left:2074px;top:231px;width:11.00px;height:1.00px;background:#505050;"></div>
<div class="a" style="left:2074px;top:243px;width:11.00px;height:1.00px;background:#505050;"></div>
<div class="a" style="left:2074px;top:255px;width:11.00px;height:1.00px;background:#505050;"></div>
<div class="a" style="left:2074px;top:267px;width:11.00px;height:1.00px;background:#505050;"></div>
<div class="a" style="left:2074px;top:279px;width:11.00px;height:1.00px;background:#505050;"></div>
<div style="position:absolute;left:0;top:0;width:2560px;height:1478px;will-change:transform">
<div class="a" style="left:2095.4px;top:65.3px;width:445.00px;height:332.40px;background:#262626;border-radius:13px"></div>
<div class="a" style="left:2108px;top:73.9px;width:213.00px;height:23.90px;background:#2f3b4b;border-radius:4px"></div>
<div id="chip" class="a t s1" style="left:2112.20px;top:74.21px;font-family:'Liberation Sans', sans-serif;font-size:17.4px;line-height:24.36px;color:#c9c9c9;letter-spacing:-1.060px;">@integration_RGB_VNG_L.fit</div>
<div id="u0" class="a t s1" style="left:2106.60px;top:98.81px;font-family:'Liberation Sans', sans-serif;font-size:17.4px;line-height:24.36px;color:#cccccc;letter-spacing:0.018px;">I would like to create a code to plot luminance value of</div>
<div id="u1" class="a t s1" style="left:2108.60px;top:123.01px;font-family:'Liberation Sans', sans-serif;font-size:17.4px;line-height:24.36px;color:#cccccc;letter-spacing:-0.074px;">this file.</div>
<div id="u2" class="a t s1" style="left:2106.60px;top:147.21px;font-family:'Liberation Sans', sans-serif;font-size:17.4px;line-height:24.36px;color:#cccccc;letter-spacing:-0.074px;">Procedure is as follows:</div>
<div id="u3" class="a t s1" style="left:2106.60px;top:171.41px;font-family:'Liberation Sans', sans-serif;font-size:17.4px;line-height:24.36px;color:#cccccc;letter-spacing:-0.111px;">1. Read luminance value of each pixel for the fit file,</div>
<div id="u4" class="a t s1" style="left:2107.60px;top:195.61px;font-family:'Liberation Sans', sans-serif;font-size:17.4px;line-height:24.36px;color:#cccccc;letter-spacing:0.000px;">and store them to 2-D array. File path of fit file is</div>
<div id="u5" class="a t s1" style="left:2107.60px;top:219.81px;font-family:'Liberation Sans', sans-serif;font-size:17.4px;line-height:24.36px;color:#cccccc;letter-spacing:-0.074px;">specified by sys.argv[1].</div>
<div id="u6" class="a t s1" style="left:2107.60px;top:244.01px;font-family:'Liberation Sans', sans-serif;font-size:17.4px;line-height:24.36px;color:#cccccc;letter-spacing:-0.142px;">2. Slice the 2-D array prepared in 1. by a single row.</div>
<div id="u7" class="a t s1" style="left:2106.60px;top:268.21px;font-family:'Liberation Sans', sans-serif;font-size:17.4px;line-height:24.36px;color:#cccccc;letter-spacing:-0.073px;">Position where to slice the array can be input by</div>
<div id="u8" class="a t s1" style="left:2107.60px;top:292.41px;font-family:'Liberation Sans', sans-serif;font-size:17.4px;line-height:24.36px;color:#cccccc;letter-spacing:-0.074px;">command line.</div>
<div id="u9" class="a t s1" style="left:2107.60px;top:316.61px;font-family:'Liberation Sans', sans-serif;font-size:17.4px;line-height:24.36px;color:#cccccc;letter-spacing:-0.160px;">3. Create a plot of luminance value by each pixel of a</div>
<div id="u10" class="a t s1" style="left:2107.60px;top:340.81px;font-family:'Liberation Sans', sans-serif;font-size:17.4px;line-height:24.36px;color:#cccccc;letter-spacing:-0.073px;">single row, specified in step 3. x-axis of plot is pixel</div>
<div id="u11" class="a t s1" style="left:2107.60px;top:365.01px;font-family:'Liberation Sans', sans-serif;font-size:17.4px;line-height:24.36px;color:#cccccc;letter-spacing:-0.051px;">coordinate, y-axis of plot is luminance.</div>
<svg width="30" height="12" viewBox="0 0 30 12" style="left:2303px;top:382px"><path d="M3.2 9.2L15.9 3.7L28 9.2" fill="none" stroke="#7d7d7d" stroke-width="2.3" stroke-linecap="round" stroke-linejoin="round"/></svg>
<div id="a1_0" class="a t s1" style="left:2094.40px;top:414.21px;font-family:'Liberation Sans', sans-serif;font-size:18.4px;line-height:25.76px;color:#cacaca;letter-spacing:0.078px;">I'll create a Python script to plot luminance values</div>
<div id="a1_1" class="a t s1" style="left:2096.40px;top:444.21px;font-family:'Liberation Sans', sans-serif;font-size:18.4px;line-height:25.76px;color:#cacaca;letter-spacing:-0.027px;">from the FITS file according to your specifications. Let</div>
<div id="a1_2" class="a t s1" style="left:2095.40px;top:474.21px;font-family:'Liberation Sans', sans-serif;font-size:18.4px;line-height:25.76px;color:#cacaca;letter-spacing:0.167px;">me start by examining the file and then implement</div>
<div id="a1_3" class="a t s1" style="left:2096.40px;top:504.21px;font-family:'Liberation Sans', sans-serif;font-size:18.4px;line-height:25.76px;color:#cacaca;letter-spacing:0.073px;">the solution.</div>
<div id="err" class="a t s1" style="left:2095.00px;top:544.21px;font-family:'Liberation Sans', sans-serif;font-size:17.0px;line-height:23.8px;color:#8b8b8b;letter-spacing:0.056px;">Error while viewing</div>
<svg width="16" height="19" viewBox="0 0 16 19" style="left:2247.5px;top:547.5px"><path d="M1.5 2.2Q1.5 1 2.7 1H9.5L14.5 6V16.8Q14.5 18 13.3 18H2.7Q1.5 18 1.5 16.8Z M9.5 1V6H14.5" fill="none" stroke="#8391a6" stroke-width="1.4" stroke-linejoin="round"/></svg>
<div id="errfile" class="a t s1" style="left:2272.00px;top:547.51px;font-family:'Liberation Mono', monospace;font-size:14.6px;line-height:20.44px;color:#5aa5f0;letter-spacing:0.042px;">integration_RGB_VNG_L.fit</div>
<svg width="11" height="7" viewBox="0 0 11 7" style="left:2499px;top:552.5px"><path d="M1 1L5.5 5.5L10 1" fill="none" stroke="#5d5d5d" stroke-width="1.3"/></svg>
<div id="a2_0" class="a t s1" style="left:2095.40px;top:589.21px;font-family:'Liberation Sans', sans-serif;font-size:18.4px;line-height:25.76px;color:#cacaca;letter-spacing:-0.070px;">The FITS file is too large to read directly. Let me create</div>
<div id="a2_1" class="a t s1" style="left:2095.40px;top:619.21px;font-family:'Liberation Sans', sans-serif;font-size:18.4px;line-height:25.76px;color:#cacaca;letter-spacing:-0.018px;">a Python script that uses the</div>
<div class="a" style="left:2333.7px;top:622.7px;width:65.30px;height:21.10px;background:#2a2a2a;border-radius:4px"></div>
<div id="astropy" class="a t s2" style="left:2338.00px;top:624.81px;font-family:'Liberation Mono', monospace;font-size:13.9px;line-height:19.46px;color:#d4d4d4;letter-spacing:-0.417px;">astropy</div>
<div id="a2_1b" class="a t s1" style="left:2405.40px;top:619.21px;font-family:'Liberation Sans', sans-serif;font-size:18.4px;line-height:25.76px;color:#cacaca;letter-spacing:0.143px;">library to read</div>
<div id="a2_2" class="a t s1" style="left:2094.40px;top:649.21px;font-family:'Liberation Sans', sans-serif;font-size:18.4px;line-height:25.76px;color:#cacaca;letter-spacing:0.000px;">FITS files and implement your requirements.</div>
<div class="a" style="left:2095px;top:688.7px;width:445.70px;height:163.10px;background:#242424;border-radius:8px;overflow:hidden"></div>
<div class="a" style="left:2095px;top:730px;width:445.7px;height:121.8px;border-radius:0 0 8px 8px;background:linear-gradient(#3b4128 0px,#3b4128 84px,#252525 121.8px)"></div>
<svg width="17.2" height="18.1" viewBox="0 0 17.2 18.1" style="left:2108.3px;top:700.5px"><g fill="#62b8a6">
<path id="pyh" d="M4 2.1Q4 0 6.1 0H9.6Q11.7 0 11.7 2.1V6.9Q11.7 8.5 10.1 8.5H5.3Q3.7 8.5 3.7 10.1V12.5H2.1Q0 12.5 0 10.4V6.7Q0 4.6 2.1 4.6H4Z"/>
<path d="M4 2.1Q4 0 6.1 0H9.6Q11.7 0 11.7 2.1V6.9Q11.7 8.5 10.1 8.5H5.3Q3.7 8.5 3.7 10.1V12.5H2.1Q0 12.5 0 10.4V6.7Q0 4.6 2.1 4.6H4Z" transform="rotate(180 8.6 9.05)"/></g>
<g fill="#242424"><circle cx="6.3" cy="2.4" r="0.85"/><circle cx="10.9" cy="15.7" r="0.85"/></g>
<g stroke="#242424" stroke-width="0.45"><path d="M4 4.6H7.8"/><path d="M9.4 13.5H13.2"/></g></svg>
<div id="fb1" class="a t s1" style="left:2137.80px;top:698.31px;font-family:'Liberation Sans', sans-serif;font-size:17.1px;line-height:23.94px;color:#9d9d9d;letter-spacing:-0.031px;">plot_luminance.py</div>
<div class="a" style="left:2442.4px;top:697.9px;width:37.10px;height:22.90px;background:#2e392b;border-radius:5px"></div>
<div id="new1" class="a t " style="left:2447.60px;top:699.20px;font-family:'Liberation Sans', sans-serif;font-size:16.0px;line-height:22.4px;color:#7ea56a;letter-spacing:-1.000px;">new</div>
<div id="p97" class="a t " style="left:2496.80px;top:698.91px;font-family:'Liberation Sans', sans-serif;font-size:17.1px;line-height:23.94px;color:#86b16b;letter-spacing:-0.500px;">+97</div>
<div id="fbc1" class="a t s2" style="left:2106.80px;top:782.31px;font-family:'Liberation Mono', monospace;font-size:13.9px;line-height:19.46px;color:#d4d4d4;letter-spacing:-0.268px;"><span style="color:#c586c0">if</span> <span style="color:#9cdcfe">__name__</span> <span style="color:#d4d4d4">==</span> <span style="color:#ce9178">"__main__"</span><span style="color:#d4d4d4">:</span></div>
<div id="fbc2" class="a t s2" style="left:2138.60px;top:805.91px;font-family:'Liberation Mono', monospace;font-size:13.9px;line-height:19.46px;color:#dcdcaa;letter-spacing:-0.380px;"><span style="color:#dcdcaa">main</span>()</div>
<div id="now0" class="a t s1" style="left:2094.80px;top:867.71px;font-family:'Liberation Sans', sans-serif;font-size:18.4px;line-height:25.76px;color:#cacaca;letter-spacing:0.148px;">Now let me create a requirements file for the</div>
<div id="now1" class="a t s1" style="left:2094.80px;top:897.81px;font-family:'Liberation Sans', sans-serif;font-size:18.4px;line-height:25.76px;color:#cacaca;letter-spacing:-0.042px;">dependencies:</div>
<div class="a" style="left:2095.2px;top:938.4px;width:445.80px;height:138.30px;background:#242424;border-radius:8px"></div>
<div class="a" style="left:2095.2px;top:979.4px;width:445.8px;height:97.3px;border-radius:0 0 8px 8px;background:#3b4128"></div>
<svg width="17.2" height="18.1" viewBox="0 0 17.2 18.1" style="left:2108.6px;top:950.3px"><g fill="#62b8a6">
<path id="pyh" d="M4 2.1Q4 0 6.1 0H9.6Q11.7 0 11.7 2.1V6.9Q11.7 8.5 10.1 8.5H5.3Q3.7 8.5 3.7 10.1V12.5H2.1Q0 12.5 0 10.4V6.7Q0 4.6 2.1 4.6H4Z"/>
<path d="M4 2.1Q4 0 6.1 0H9.6Q11.7 0 11.7 2.1V6.9Q11.7 8.5 10.1 8.5H5.3Q3.7 8.5 3.7 10.1V12.5H2.1Q0 12.5 0 10.4V6.7Q0 4.6 2.1 4.6H4Z" transform="rotate(180 8.6 9.05)"/></g>
<g fill="#242424"><circle cx="6.3" cy="2.4" r="0.85"/><circle cx="10.9" cy="15.7" r="0.85"/></g>
<g stroke="#242424" stroke-width="0.45"><path d="M4 4.6H7.8"/><path d="M9.4 13.5H13.2"/></g></svg>
<div id="fb2" class="a t s1" style="left:2137.60px;top:949.01px;font-family:'Liberation Sans', sans-serif;font-size:17.1px;line-height:23.94px;color:#9d9d9d;letter-spacing:0.133px;">requirements.txt</div>
<div class="a" style="left:2450.5px;top:947.9px;width:37.30px;height:23.30px;background:#2e392b;border-radius:5px"></div>
<div id="new2" class="a t " style="left:2455.60px;top:949.41px;font-family:'Liberation Sans', sans-serif;font-size:16.0px;line-height:22.4px;color:#7ea56a;letter-spacing:-1.000px;">new</div>
<div id="p4" class="a t " style="left:2504.80px;top:949.20px;font-family:'Liberation Sans', sans-serif;font-size:17.1px;line-height:23.94px;color:#86b16b;letter-spacing:1.000px;">+4</div>
<div id="req0" class="a t s2" style="left:2106.80px;top:983.10px;font-family:'Liberation Mono', monospace;font-size:13.9px;line-height:19.46px;color:#d4d4d4;letter-spacing:-0.380px;">numpy&gt;=1.21.0</div>
<div id="req1" class="a t s2" style="left:2106.80px;top:1007.56px;font-family:'Liberation Mono', monospace;font-size:13.9px;line-height:19.46px;color:#d4d4d4;letter-spacing:-0.380px;">matplotlib&gt;=3.5.0</div>
<div id="req2" class="a t s2" style="left:2106.80px;top:1032.00px;font-family:'Liberation Mono', monospace;font-size:13.9px;line-height:19.46px;color:#d4d4d4;letter-spacing:-0.380px;">astropy&gt;=5.0.0</div>
<div id="test" class="a t s1" style="left:2094.60px;top:1094.21px;font-family:'Liberation Sans', sans-serif;font-size:18.4px;line-height:25.76px;color:#cacaca;letter-spacing:0.000px;">Let me test the script with your FITS file:</div>
<div class="a" style="left:2095.6px;top:1133.8px;width:444.7px;height:220.7px;border:1px solid #282828;border-radius:7px;overflow:hidden">
</div>
<div class="a" style="left:2096.6px;top:1174px;width:442.70px;height:1.00px;background:#262626;"></div>
<div id="cmdh" class="a t s1" style="left:2106.20px;top:1144.41px;font-family:'Liberation Sans', sans-serif;font-size:17.0px;line-height:23.8px;color:#8f8f8f;letter-spacing:-0.515px;">Command python in ...\Python\4_misc</div>
<svg width="16" height="16" viewBox="0 0 16 16" style="left:2506.8px;top:1148.3px"><g fill="none" stroke="#9a9a9a" stroke-width="1.4"><path d="M6 3.5H15"/><circle cx="3.3" cy="3.5" r="2.3"/><path d="M1 12.3H10"/><circle cx="12.7" cy="12.3" r="2.3"/></g></svg>
<div class="a" style="left:2104px;top:1194.8px;width:11px;height:11px;border-radius:50%;background:#4a8cc8"></div>
<div class="a" style="left:2096.6px;top:1175px;width:442.7px;height:178.5px;overflow:hidden">
</div>
<div id="cmd0" class="a t s1" style="left:2122.00px;top:1192.81px;font-family:'Liberation Mono', monospace;font-size:17.7px;line-height:21.33px;color:#dcdcaa;letter-spacing:-0.370px;"><span style="color:#dcdcaa">python</span> <span style="color:#ce9178">plot_luminance.py</span></div>
<div id="cmd1" class="a t s1" style="left:2122.00px;top:1214.10px;font-family:'Liberation Mono', monospace;font-size:17.7px;line-height:21.33px;color:#ce9178;letter-spacing:-0.370px;">integration_RGB_VNG_L.fit</div>
<div id="out0" class="a t s1" style="left:2122.00px;top:1249.31px;font-family:'Liberation Mono', monospace;font-size:17.7px;line-height:21.33px;color:#d4d4d4;letter-spacing:-0.370px;">Reading luminance data from:</div>
<div id="out1" class="a t s1" style="left:2122.00px;top:1270.64px;font-family:'Liberation Mono', monospace;font-size:17.7px;line-height:21.33px;color:#d4d4d4;letter-spacing:-0.370px;">integration_RGB_VNG_L.fit</div>
<div id="out2" class="a t s1" style="left:2122.00px;top:1291.96px;font-family:'Liberation Mono', monospace;font-size:17.7px;line-height:21.33px;color:#d4d4d4;letter-spacing:-0.370px;">Data shape: (6388, 9576)</div>
<div id="out3" class="a t s1" style="left:2122.00px;top:1313.30px;font-family:'Liberation Mono', monospace;font-size:17.7px;line-height:21.33px;color:#d4d4d4;letter-spacing:-0.370px;">No row specified, using middle row: 3194</div>
<div id="out4" class="a t s1" style="left:2122.00px;top:1334.63px;font-family:'Liberation Mono', monospace;font-size:17.7px;line-height:21.33px;color:#d4d4d4;letter-spacing:-0.370px;">Plotting luminance for row 3194</div>
<div class="a" style="left:2096.6px;top:1353.5px;width:442.70px;height:16.50px;background:#181818;"></div>
<div class="a" style="left:2095.6px;top:1133.8px;width:444.7px;height:220.7px;border:1px solid #282828;border-radius:7px"></div>
<div class="a" style="left:2084.3px;top:1370.7px;width:466.90px;height:92.00px;background:#242424;border-radius:14px"></div>
<div id="ask" class="a t s1" style="left:2097.60px;top:1381.01px;font-family:'Liberation Sans', sans-serif;font-size:17.0px;line-height:23.8px;color:#8c8c8c;letter-spacing:0.050px;">Ask anything (Ctrl+L)</div>
<svg width="12" height="12" viewBox="0 0 12 12" style="left:2098px;top:1435px"><path d="M6 0.5V11.5M0.5 6H11.5" stroke="#a8a8a8" stroke-width="1.4"/></svg>
<svg width="17" height="12" viewBox="0 0 17 12" style="left:2124.7px;top:1434.5px"><path d="M5.5 1L1 6L5.5 11M11.5 1L16 6L11.5 11" fill="none" stroke="#a8a8a8" stroke-width="1.4"/></svg>
<div id="codelbl" class="a t s1" style="left:2145.20px;top:1430.51px;font-family:'Liberation Sans', sans-serif;font-size:17.0px;line-height:23.8px;color:#a8a8a8;letter-spacing:-1.500px;">Code</div>
<div id="swe" class="a t s1" style="left:2200.80px;top:1430.51px;font-family:'Liberation Sans', sans-serif;font-size:17.0px;line-height:23.8px;color:#a8a8a8;letter-spacing:-1.667px;">SWE-1.5</div>
<svg width="22" height="22" viewBox="0 0 22 22" style="left:2454.7px;top:1430.8px"><circle cx="11" cy="11" r="8.8" fill="none" stroke="#3a3a3a" stroke-width="2"/><path d="M11 2.2A8.8 8.8 0 0 1 19.8 11" fill="none" stroke="#8a8a8a" stroke-width="2"/></svg>
<svg width="14" height="17" viewBox="0 0 14 17" style="left:2489px;top:1433px"><g fill="none" stroke="#a8a8a8" stroke-width="1.4"><rect x="4" y="1" width="6" height="10" rx="3"/><path d="M1.2 7.5A5.8 5.8 0 0 0 12.8 7.5M7 13.3V16"/></g></svg>
<div class="a" style="left:2515.8px;top:1427.7px;width:26.5px;height:26.5px;border-radius:50%;background:#6b6b6b"></div>
<svg width="14" height="14" viewBox="0 0 14 14" style="left:2522px;top:1434px"><path d="M7 12.8V1.5M2.2 6.3L7 1.5L11.8 6.3" fill="none" stroke="#353535" stroke-width="1.3"/></svg>
</div>
<div class="a" style="left:0px;top:1473px;width:2560.00px;height:2.00px;background:#2a2a2a;"></div>
<div class="a" style="left:0px;top:1475px;width:2560.00px;height:3.00px;background:#181818;"></div>
<div class="a" style="left:1547px;top:1475px;width:43.00px;height:3.00px;background:#3b3b42;"></div>
<div class="a" style="left:0px;top:1415px;width:6.50px;height:1.00px;background:#262626;"></div>
<div class="a" style="left:0px;top:1445px;width:6.50px;height:1.00px;background:#262626;"></div>
</body></html>
